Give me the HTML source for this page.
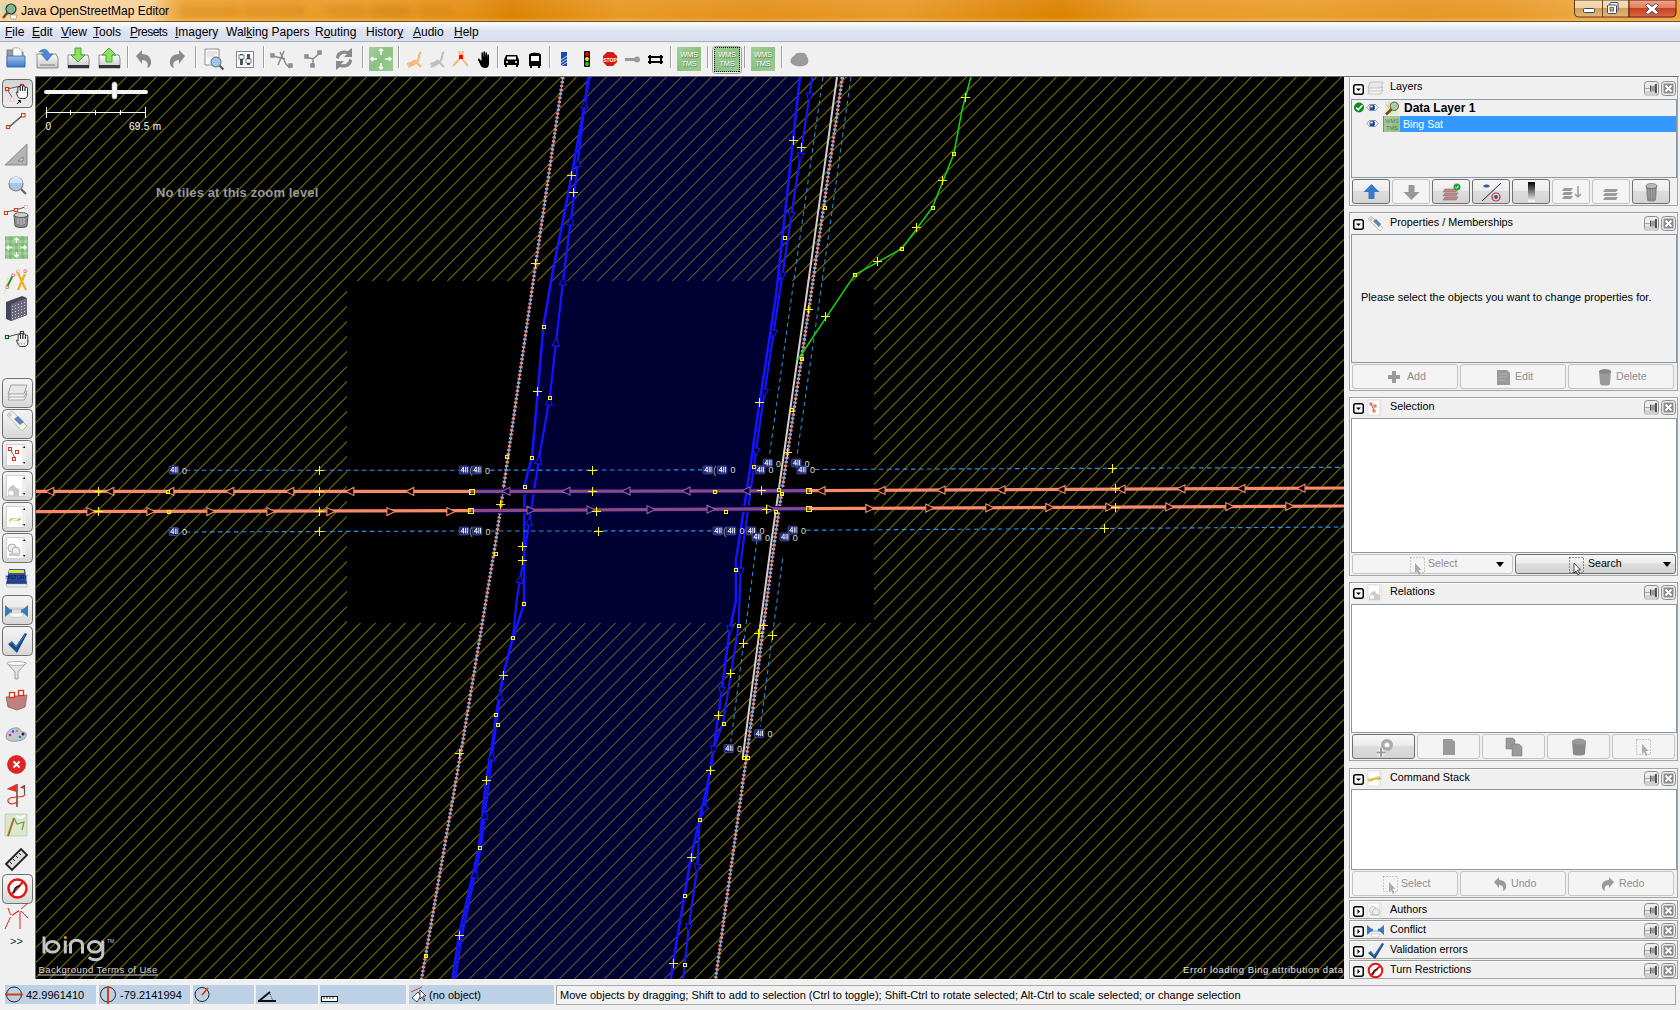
<!DOCTYPE html>
<html><head><meta charset="utf-8">
<style>
*{box-sizing:border-box}
html,body{margin:0;padding:0}
body{width:1680px;height:1010px;overflow:hidden;position:relative;background:#f0f0f0;font-family:"Liberation Sans",sans-serif;font-size:12px;color:#000}
.a{position:absolute}
#title{left:0;top:0;width:1680px;height:22px;background:linear-gradient(90deg,#eeb060 0px,#eca232 180px,#e99c28 350px,#e39018 470px,#dc8406 510px,#e89a28 620px,#e49220 760px,#e89c2c 900px,#e08c14 1000px,#dc8404 1060px,#e79a28 1150px,#eaa030 1300px,#e69828 1420px,#e89c2c 1500px,#eea640 1580px,#eaa040 1680px);border-bottom:1px solid #6e5030}
#title .t{left:21px;top:4px;font-size:12px;color:#000;white-space:nowrap}
#menu{left:0;top:22px;width:1680px;height:20px;background:linear-gradient(#fbfcfe 0,#f4f6fb 3px,#dde3f1 9px,#d8dff0 100%);border-bottom:1px solid #a8aeb8}
#menu span{position:absolute;top:3px;white-space:nowrap}
#tb{left:0;top:42px;width:1680px;height:34px;background:#f0f0f0}
#left{left:0;top:76px;width:36px;height:905px;background:#f0f0f0}
#map{left:36px;top:76px;width:1308px;height:904px;background:#000;overflow:hidden}
#rp{left:1344px;top:76px;width:336px;height:905px;background:#f0f0f0}
#status{left:0;top:980px;width:1680px;height:30px;background:#f0f0f0}
.sf{position:absolute;top:5px;height:19px;background:#bcd0e6;white-space:nowrap;padding-left:21px;line-height:21px;font-size:11px}
.dlg{position:absolute;left:1349px;width:329px;border:1px solid #a0a0a0;border-bottom-color:#b8b8b8;background:#f0f0f0}
.hdr{position:absolute;left:0;top:0;width:100%;height:20px}
.hdr .tg{position:absolute;left:3px;top:6px;width:11px;height:10px;border:1.5px solid #000;border-radius:2px;background:#fff}
.hdr .lbl{position:absolute;left:40px;top:3px;font-size:12px;color:#000;white-space:nowrap}
.pin,.cls{position:absolute;top:4px;width:15px;height:15px;border:1px solid #909090;border-radius:3px;background:#ececec}
.pin{left:294px}.cls{left:311px}
.list{position:absolute;left:1px;border:1px solid #8c98a8;background:#fff}
.btn{position:absolute;height:25px;border:1px solid #b8b8b8;border-radius:3px;background:#f2f2f2;color:#8a8a8a;font-size:10.6px;text-align:center;line-height:23px}
.sep{position:absolute;top:50px;width:2px;height:22px;border-left:1px solid #a0a0a0;border-right:1px solid #fff}
</style></head><body>
<div id="title" class="a"><div class="a" style="left:0;top:0;width:1680px;height:21px;background:linear-gradient(180deg,rgba(255,255,255,0.06) 0,rgba(255,255,255,0) 60%,rgba(255,230,170,0) 85%,rgba(255,220,150,0.35) 100%)"></div>
<div class="a" style="left:0;top:0;width:240px;height:21px;background:linear-gradient(90deg,rgba(248,214,164,0.95) 0,rgba(248,216,168,0.95) 150px,rgba(246,200,130,0.45) 168px,rgba(240,180,100,0) 185px)"></div>
<svg class="a" style="left:1px;top:2px" width="18" height="18" viewBox="0 0 18 18"><rect x="1" y="1" width="11" height="11" fill="#c8e0b0"/><circle cx="10" cy="7" r="5" fill="#80b890" stroke="#333" stroke-width="1.2"/><path d="M7 10l-5 6" stroke="#6a4a20" stroke-width="2.5"/><path d="M9 13h7l-1 4H10z" fill="#fff" stroke="#666" stroke-width="0.5"/></svg>
<div class="a" style="left:175px;top:4px;width:300px;height:14px;filter:blur(3px);opacity:0.15"><div class="a" style="left:5px;top:3px;width:60px;height:8px;background:#a05000"></div><div class="a" style="left:70px;top:2px;width:60px;height:9px;background:#a05000"></div><div class="a" style="left:150px;top:2px;width:40px;height:9px;background:#a05000"></div><div class="a" style="left:195px;top:2px;width:40px;height:10px;background:#904800"></div><div class="a" style="left:245px;top:3px;width:30px;height:8px;background:#a05000"></div></div><div class="t a">Java OpenStreetMap Editor</div>
<svg class="a" style="left:1574px;top:0" width="104" height="19" viewBox="0 0 104 19">
<defs><linearGradient id="wb" x1="0" y1="0" x2="0" y2="1"><stop offset="0" stop-color="#f6dfbc"/><stop offset="0.45" stop-color="#efd2a4"/><stop offset="0.5" stop-color="#cf9f58"/><stop offset="1" stop-color="#e2b878"/></linearGradient>
<linearGradient id="wc" x1="0" y1="0" x2="0" y2="1"><stop offset="0" stop-color="#f2a68a"/><stop offset="0.45" stop-color="#e08060"/><stop offset="0.5" stop-color="#c8401c"/><stop offset="1" stop-color="#d86a48"/></linearGradient></defs>
<path d="M0.5 0v13a4 4 0 0 0 4 4H55V0z" fill="url(#wb)" stroke="#5a3c1c" stroke-width="1"/>
<path d="M28.5 0v17" stroke="#6a4a2a" stroke-width="1"/>
<path d="M55 0v17h43a4 4 0 0 0 4-4V0z" fill="url(#wc)" stroke="#5a1c10" stroke-width="1"/>
<rect x="9.5" y="8.5" width="11" height="4" rx="1" fill="#fff" stroke="#3a4a6a" stroke-width="1"/>
<rect x="36" y="2.5" width="8" height="8" rx="1" fill="#fff" stroke="#3a4a6a" stroke-width="1"/><rect x="33.5" y="5" width="9" height="8.5" rx="1" fill="#fff" stroke="#3a4a6a" stroke-width="1"/><rect x="36" y="7.5" width="3.5" height="3.5" fill="#d8b070" stroke="#3a4a6a" stroke-width="0.8"/>
<path d="M74 3.5l4 3.2 4-3.2 2.5 2-3.5 3.5 3.5 3.5-2.5 2-4-3.2-4 3.2-2.5-2 3.5-3.5-3.5-3.5z" fill="#fff" stroke="#3a4a6a" stroke-width="0.9"/>
</svg>
</div>
<div id="menu" class="a">
<span style="left:5px"><u>F</u>ile</span><span style="left:32px"><u>E</u>dit</span><span style="left:61px"><u>V</u>iew</span><span style="left:93px"><u>T</u>ools</span><span style="left:130px;letter-spacing:-0.5px"><u>P</u>resets</span><span style="left:175px"><u>I</u>magery</span><span style="left:226px">Wal<u>k</u>ing Papers</span><span style="left:315px">R<u>o</u>uting</span><span style="left:366px">Histor<u>y</u></span><span style="left:413px"><u>A</u>udio</span><span style="left:454px"><u>H</u>elp</span>
</div>
<div id="tb" class="a">
<svg class="a" style="left:0;top:0" width="830" height="34" viewBox="0 42 830 34">
<defs>
<linearGradient id="gblue" x1="0" y1="0" x2="0" y2="1"><stop offset="0" stop-color="#9cc3ec"/><stop offset="1" stop-color="#3d78c8"/></linearGradient>
<linearGradient id="gdisk" x1="0" y1="0" x2="0" y2="1"><stop offset="0" stop-color="#fafafa"/><stop offset="1" stop-color="#c8c8c8"/></linearGradient>
<linearGradient id="wms" x1="0" y1="0" x2="1" y2="1"><stop offset="0" stop-color="#a4d098"/><stop offset="0.5" stop-color="#8cc284"/><stop offset="1" stop-color="#9ccb90"/></linearGradient>
</defs>
<!-- open -->
<path d="M7 50h6l2 2h8v14H7z" fill="#9a9a9a" stroke="#6a6a6a" stroke-width="0.8"/>
<path d="M13 48h6l3 3v6h-9z" fill="#fff" stroke="#888" stroke-width="0.6"/>
<path d="M7 56h18v11H7z" fill="url(#gblue)" stroke="#2d5fa8" stroke-width="0.8"/>
<!-- save -->
<path d="M37 54h19l2 4v10H37v-10z" fill="url(#gdisk)" stroke="#777" stroke-width="0.8"/>
<rect x="40" y="64" width="15" height="2" fill="#aaa"/>
<path d="M39 52c3-4 9-4 10 2h4l-6 7-6-7h4c-1-2-4-2-6-2z" fill="#4a8ad0" stroke="#2a6ab0" stroke-width="0.5"/>
<!-- download -->
<path d="M68 55h20l1 4v9H68v-9z" fill="url(#gdisk)" stroke="#777" stroke-width="0.8"/>
<rect x="68" y="65" width="21" height="3" fill="#333"/>
<path d="M75 48h6v7h4l-7 7-7-7h4z" fill="#8ee060" stroke="#3aa020" stroke-width="0.9"/>
<!-- upload -->
<path d="M99 55h20l1 4v9H99v-9z" fill="url(#gdisk)" stroke="#777" stroke-width="0.8"/>
<rect x="99" y="65" width="21" height="3" fill="#333"/>
<path d="M106 62h6v-7h4l-7-7-7 7h4z" fill="#8ee060" stroke="#3aa020" stroke-width="0.9"/>
<!-- undo/redo -->
<path d="M136 56l6-6v4c6 0 10 4 9 10-1 3-3 4-4 4 2-4 0-8-5-8v4z" fill="#8a8a8a"/>
<path d="M185 56l-6-6v4c-6 0-10 4-9 10 1 3 3 4 4 4-2-4 0-8 5-8v4z" fill="#8a8a8a"/>
<!-- doc magnifier -->
<path d="M205 49h14v16h-14z" fill="#fafafa" stroke="#777" stroke-width="0.8"/>
<path d="M207 52h10M207 54h10M207 56h8" stroke="#bbb" stroke-width="0.7"/>
<circle cx="216" cy="62" r="5" fill="#9cc6ee" stroke="#666" stroke-width="1"/>
<path d="M219.5 65.5l4 4" stroke="#555" stroke-width="2"/>
<!-- prefs -->
<rect x="236.5" y="51.5" width="17" height="16" fill="#fafafa" stroke="#888"/>
<rect x="240" y="54" width="3" height="11" fill="#456"/><rect x="239" y="55" width="5" height="4" fill="#fff" stroke="#333" stroke-width="0.6"/>
<rect x="247" y="54" width="3" height="11" fill="#456"/><rect x="246" y="59" width="5" height="4" fill="#fff" stroke="#333" stroke-width="0.6"/>
<!-- split/combine/reverse grey -->
<g stroke="#8a8a8a" fill="#9a9a9a" stroke-width="1.5">
<path d="M273 56l12 3M280 52l6 12 4 4M284 51l-6 14" fill="none"/>
<rect x="271" y="54" width="3" height="3"/><rect x="289" y="64" width="3" height="3"/>
<path d="M306 57l7 2 8-7M313 59l0 7" fill="none"/>
<rect x="305" y="55" width="3" height="3"/><rect x="318" y="51" width="3" height="3"/><rect x="311" y="64" width="3" height="3"/>
</g>
<path d="M336 58c0-6 6-9 12-7l4-3v9h-8l3-3c-4-1-8 1-8 5z M352 60c0 6-6 9-12 7l-4 3v-9h8l-3 3c4 1 8-1 8-5z" fill="#8a8a8a"/>
<!-- zoom to data green -->
<rect x="369" y="47" width="24" height="24" fill="url(#wms)"/>
<path d="M381 49v6M379 51l2-2 2 2M381 69v-6M379 67l2 2 2-2M371 59h6M373 57l-2 2 2 2M391 59h-6M389 57l2 2-2 2" stroke="#fff" stroke-width="1.5" fill="none"/>
<!-- orange tools -->
<path d="M408 67c4-2 8-3 10-7 2-3 0-6 3-8M407 64c3 0 5-1 7-3M414 60l7 7" stroke="#f3b878" stroke-width="2.2" fill="none"/>
<path d="M431 67c4-2 8-3 10-7 2-3 0-6 3-8M430 64c3 0 5-1 7-3M437 60l7 7" stroke="#c0c0c0" stroke-width="2.2" fill="none"/>
<path d="M453 66l8-9 7 9M461 57l-2-6M461 57l2-6" stroke="#f3b878" stroke-width="2" fill="none"/><rect x="459" y="55" width="4" height="4" fill="#f00"/>
<!-- hand -->
<path d="M478 60l2 4c1 3 3 4 5 4 3 0 4-2 4-5v-8c0-1-1.5-1-1.5 0v4l-0.5-6c0-1-1.5-1-1.5 0v5l-0.5-6c0-1-1.5-1-1.5 0v6l-0.5-5c0-1-1.5-1-1.5 0v8l-2-2c-1-1-2 0-1.5 1z" fill="#000"/>
<!-- car -->
<path d="M504 60l2-5h11l2 5v5h-15z" fill="#000"/><rect x="507" y="56.5" width="9" height="3" fill="#fff"/><circle cx="507" cy="62" r="1" fill="#fff"/><circle cx="516" cy="62" r="1" fill="#fff"/><rect x="505" y="65" width="2" height="2" fill="#000"/><rect x="516" y="65" width="2" height="2" fill="#000"/>
<!-- bus -->
<path d="M529 55c0-3 12-3 12 0v11h-12z" fill="#000"/><rect x="531" y="56" width="8" height="5" fill="#fff"/><rect x="530" y="66" width="2" height="2"/><rect x="538" y="66" width="2" height="2"/>
<!-- sign blue -->
<rect x="561" y="52" width="6" height="14" fill="#1a48b0"/><path d="M561 60l6-4M561 63l6-4M561 66l6-4" stroke="#fff" stroke-width="0.8"/>
<!-- traffic light -->
<rect x="584" y="51" width="6" height="16" rx="1" fill="#111"/><circle cx="587" cy="54" r="2" fill="#f00"/><circle cx="587" cy="59" r="2" fill="#ee0"/><circle cx="587" cy="64" r="2" fill="#2c2"/>
<!-- stop -->
<path d="M607 52h6l4 4v6l-4 4h-6l-4-4v-6z" fill="#d81818"/><text x="610" y="61.5" font-size="5" font-family="Liberation Sans" font-weight="bold" fill="#fff" text-anchor="middle">STOP</text>
<!-- barrier -->
<rect x="625" y="58" width="10" height="3" fill="#999"/><circle cx="637" cy="59.5" r="3" fill="#999"/>
<!-- bridge -->
<path d="M648 57h15M648 62h15M650 55v9M661 55v9" stroke="#000" stroke-width="2" fill="none"/>
<!-- wms -->
<rect x="677" y="47" width="24" height="24" fill="url(#wms)"/>
<rect x="712.5" y="46.5" width="29" height="27" rx="3" fill="none" stroke="#a0a0a0"/>
<rect x="714" y="47" width="26" height="25" fill="url(#wms)"/><rect x="714.5" y="47.5" width="25" height="24" fill="none" stroke="#000" stroke-width="1" stroke-dasharray="1 1" shape-rendering="crispEdges"/>
<rect x="751" y="47" width="24" height="24" fill="url(#wms)"/>
<g font-family="Liberation Sans" font-size="7.5" text-anchor="middle" letter-spacing="-0.3"><text x="689.6" y="57.6" fill="#5a7a5a">WMS</text><text x="689.6" y="66.6" fill="#5a7a5a">TMS</text><text x="689" y="57" fill="#fff">WMS</text><text x="689" y="66" fill="#fff">TMS</text><text x="727.6" y="57.6" fill="#5a7a5a">WMS</text><text x="727.6" y="66.6" fill="#5a7a5a">TMS</text><text x="727" y="57" fill="#fff">WMS</text><text x="727" y="66" fill="#fff">TMS</text><text x="763.6" y="57.6" fill="#5a7a5a">WMS</text><text x="763.6" y="66.6" fill="#5a7a5a">TMS</text><text x="763" y="57" fill="#fff">WMS</text><text x="763" y="66" fill="#fff">TMS</text></g>
<!-- cloud -->
<path d="M792 64c-3-2-1-7 2-8 1-3 5-4 7-3 3-1 6 1 6 4 2 2 2 6-1 8-4 2-10 2-14-1z" fill="#9a9a9a"/>
</svg>
<div class="sep" style="left:127px;top:4px"></div><div class="sep" style="left:195px;top:4px"></div><div class="sep" style="left:263px;top:4px"></div><div class="sep" style="left:362px;top:4px"></div><div class="sep" style="left:398px;top:4px"></div><div class="sep" style="left:497px;top:4px"></div><div class="sep" style="left:549px;top:4px"></div><div class="sep" style="left:670px;top:4px"></div><div class="sep" style="left:707px;top:4px"></div><div class="sep" style="left:744px;top:4px"></div><div class="sep" style="left:781px;top:4px"></div>
</div>
<div id="left" class="a"><svg class="a" style="left:0;top:0" width="36" height="905" viewBox="0 76 36 905"><defs><linearGradient id="gbtn" x1="0" y1="0" x2="0" y2="1"><stop offset="0" stop-color="#f4f4f4"/><stop offset="0.5" stop-color="#e8e8e8"/><stop offset="1" stop-color="#d6d6d6"/></linearGradient><linearGradient id="gbk" x1="0" y1="0" x2="0" y2="1"><stop offset="0" stop-color="#3a60b8"/><stop offset="1" stop-color="#1e3c90"/></linearGradient><pattern id="wms2" width="6" height="6" patternUnits="userSpaceOnUse"><rect width="6" height="6" fill="#8fc58a"/><rect x="0" y="0" width="3" height="3" fill="#a6d29c"/><rect x="3" y="3" width="3" height="3" fill="#7cb878"/></pattern></defs><linearGradient id="gpr" x1="0" y1="0" x2="0" y2="1"><stop offset="0" stop-color="#d2d2d2"/><stop offset="0.5" stop-color="#e4e4e4"/><stop offset="1" stop-color="#ececec"/></linearGradient><rect x="2.5" y="79.5" width="30" height="28" rx="4" fill="url(#gpr)" stroke="#6a6a6a"/><path d="M7 89l14-3M7 89l5 8" stroke="#222" stroke-width="0.7" fill="none"/><rect x="5.5" y="87.5" width="3" height="3" fill="#fff" stroke="#e03010" stroke-width="1.2"/><rect x="20.5" y="84.5" width="3" height="3" fill="#fff" stroke="#e03010" stroke-width="1.2"/><rect x="10.5" y="98" width="3" height="3" fill="#fff" stroke="#f0a090" stroke-width="0.6"/><g fill="#fff" stroke="#000" stroke-width="0.8"><rect x="17.9" y="86.6" width="2.4" height="7" rx="1.2"/><rect x="20.3" y="85.4" width="2.4" height="8" rx="1.2"/><rect x="22.7" y="85.8" width="2.4" height="8" rx="1.2"/><rect x="25.1" y="87.2" width="2.4" height="7" rx="1.2"/><path d="M16.2 92.3c.6-.6 1.3-.3 1.7.3v-1h9.6v3.2c0 2.3-1.6 3.7-3.8 3.7h-2.6c-1.6 0-2.6-.7-3.3-2z"/></g><path d="M18.3 91.6h8.9" stroke="#fff" stroke-width="1.2"/><path d="M17 104l3.2-3.2M18 100.6h2.4v2.4" stroke="#000" stroke-width="1" fill="none"/><path d="M9 127l14-12" stroke="#1a1a60" stroke-width="1.3"/><path d="M9 127l14-12" stroke="#e0d040" stroke-width="0.5"/><rect x="6.5" y="125.5" width="3" height="3" fill="#fff" stroke="#e03010"/><rect x="21.5" y="113.5" width="3.5" height="3.5" fill="#fff" stroke="#e03010"/><path d="M5 165L27 144v21z" fill="#b4b4b4" stroke="#7a7a7a" stroke-width="0.8"/><path d="M18 161l5-4v4z" fill="#ddd" stroke="#666" stroke-width="0.7"/><circle cx="16" cy="184" r="7" fill="#a8c4e8" stroke="#888" stroke-width="1.2"/><path d="M9.5 183a6.5 6.5 0 0 1 13 0z" fill="#d8e4f4"/><path d="M21 189l5 5" stroke="#666" stroke-width="2.2"/><path d="M6 212l10-2 9-3" stroke="#333" stroke-width="0.8" fill="none"/><rect x="4.5" y="211.5" width="3" height="3" fill="#fff" stroke="#e03010"/><rect x="14.5" y="208.5" width="3" height="3" fill="#fff" stroke="#e03010"/><rect x="24.5" y="205.5" width="3" height="3" fill="#fff" stroke="#f0a090" stroke-width="0.6"/><path d="M14 215h14l-1 11c-1 2-11 2-12 0z" fill="#8a8a8a" stroke="#444" stroke-width="0.8"/><ellipse cx="21" cy="215" rx="7" ry="2.5" fill="#ccc" stroke="#444" stroke-width="0.8"/><path d="M18 218v6M21 218v7M24 218v6" stroke="#ddd" stroke-width="0.8"/><rect x="5" y="236" width="23" height="23" fill="url(#wms2)"/><path d="M16.5 238v5M14.5 240l2-2 2 2M16.5 257v-5M14.5 255l2 2 2-2M7 247.5h5M9 245.5l-2 2 2 2M26 247.5h-5M24 245.5l2 2-2 2" stroke="#fff" stroke-width="1.3" fill="none"/><path d="M7 287l6-12" stroke="#1a9a1a" stroke-width="2"/><path d="M18 290l7-16M17 271l9 19" stroke="#e8b020" stroke-width="2.2"/><rect x="17" y="270" width="2.5" height="2.5" fill="#fff" stroke="#f08080" stroke-width="0.6"/><rect x="24" y="270" width="2.5" height="2.5" fill="#fff" stroke="#e03030" stroke-width="0.6"/><rect x="6" y="286" width="2.5" height="2.5" fill="#fff" stroke="#e03030" stroke-width="0.6"/><rect x="12" y="274" width="2.5" height="2.5" fill="#fff" stroke="#e03030" stroke-width="0.6"/><path d="M4 294l4-16" stroke="#cca" stroke-width="0.5"/><path d="M6 302l16-6 5 2v17l-16 6-5-2z" fill="#454555"/><path d="M11 304l16-6v17l-16 6z" fill="#6a6a7a"/><g fill="#ccd"><rect x="12" y="306" width="1" height="1"/><rect x="12" y="309" width="1" height="1"/><rect x="12" y="312" width="1" height="1"/><rect x="12" y="315" width="1" height="1"/><rect x="12" y="318" width="1" height="1"/><rect x="15" y="305" width="1" height="1"/><rect x="15" y="308" width="1" height="1"/><rect x="15" y="311" width="1" height="1"/><rect x="15" y="314" width="1" height="1"/><rect x="15" y="317" width="1" height="1"/><rect x="18" y="304" width="1" height="1"/><rect x="18" y="307" width="1" height="1"/><rect x="18" y="310" width="1" height="1"/><rect x="18" y="313" width="1" height="1"/><rect x="18" y="316" width="1" height="1"/><rect x="21" y="303" width="1" height="1"/><rect x="21" y="306" width="1" height="1"/><rect x="21" y="309" width="1" height="1"/><rect x="21" y="312" width="1" height="1"/><rect x="21" y="315" width="1" height="1"/><rect x="24" y="302" width="1" height="1"/><rect x="24" y="305" width="1" height="1"/><rect x="24" y="308" width="1" height="1"/><rect x="24" y="311" width="1" height="1"/><rect x="24" y="314" width="1" height="1"/></g><path d="M7 337l15-4" stroke="#222" stroke-width="0.8"/><rect x="5.5" y="335.5" width="3" height="3" fill="#fff" stroke="#1a5a1a" stroke-width="1.2"/><rect x="20.5" y="331.5" width="3" height="3" fill="#fff" stroke="#1a5a1a" stroke-width="1.2"/><g transform="translate(0.3,248)"><g fill="#fff" stroke="#000" stroke-width="0.8"><rect x="17.9" y="86.6" width="2.4" height="7" rx="1.2"/><rect x="20.3" y="85.4" width="2.4" height="8" rx="1.2"/><rect x="22.7" y="85.8" width="2.4" height="8" rx="1.2"/><rect x="25.1" y="87.2" width="2.4" height="7" rx="1.2"/><path d="M16.2 92.3c.6-.6 1.3-.3 1.7.3v-1h9.6v3.2c0 2.3-1.6 3.7-3.8 3.7h-2.6c-1.6 0-2.6-.7-3.3-2z" fill="#eef6ee"/></g><path d="M18.3 91.6h8.9" stroke="#fff" stroke-width="1.2"/><path d="M19 94.5v2M21.5 94.5v2M24 94.5v2" stroke="#3a8a3a" stroke-width="0.6"/></g><rect x="2.5" y="378.5" width="30" height="29" rx="4" fill="url(#gbtn)" stroke="#6e6e6e"/><rect x="2.5" y="409.5" width="30" height="29" rx="4" fill="url(#gbtn)" stroke="#6e6e6e"/><rect x="2.5" y="440.5" width="30" height="29" rx="4" fill="url(#gbtn)" stroke="#6e6e6e"/><rect x="2.5" y="471.5" width="30" height="29" rx="4" fill="url(#gbtn)" stroke="#6e6e6e"/><rect x="2.5" y="502.5" width="30" height="29" rx="4" fill="url(#gbtn)" stroke="#6e6e6e"/><rect x="2.5" y="533.5" width="30" height="29" rx="4" fill="url(#gbtn)" stroke="#6e6e6e"/><rect x="2.5" y="595.5" width="30" height="29" rx="4" fill="url(#gbtn)" stroke="#6e6e6e"/><rect x="2.5" y="626.5" width="30" height="29" rx="4" fill="url(#gbtn)" stroke="#6e6e6e"/><rect x="2.5" y="874.5" width="30" height="29" rx="4" fill="url(#gbtn)" stroke="#6e6e6e"/><g fill="#f6f6f6" stroke="#909090" stroke-width="0.8"><path d="M8 400l3-6h16l-3 6z"/><path d="M8 397l3-6h16l-3 6z"/><path d="M8 394l3-9h16l-3 9z" fill="#e6e6e6"/></g><path d="M7 415l5-4 15 15-5 5z" fill="#f4f4ec" stroke="#b0b090" stroke-width="0.8"/><path d="M14 419l4-3 6 6-4 3z" fill="#5a80c0"/><circle cx="10" cy="415" r="1.2" fill="none" stroke="#999" stroke-width="0.6"/><rect x="6.5" y="444.5" width="18" height="21" fill="#fff" stroke="#bbb" stroke-width="0.6"/><rect x="22" y="445" width="4" height="20" fill="#eee"/><path d="M23 448l1.2-2 1.2 2zM23 462l1.2 2 1.2-2z" fill="#000"/><path d="M10 449l3 5 2 4" stroke="#333" stroke-width="0.8" fill="none"/><rect x="8.5" y="447.5" width="3" height="3" fill="#fff" stroke="#e03010"/><rect x="15.5" y="450.5" width="3" height="3" fill="#fff" stroke="#e03010"/><rect x="12.5" y="457.5" width="3" height="3" fill="#fff" stroke="#e03010"/><rect x="6.5" y="475.5" width="18" height="21" fill="#fff" stroke="#bbb" stroke-width="0.6"/><rect x="22" y="476" width="4" height="20" fill="#eee"/><path d="M23 479l1.2-2 1.2 2zM23 493l1.2 2 1.2-2z" fill="#000"/><path d="M8 492c0-4 3-7 6-7l2 3 3 1v7H8z" fill="#c8c8c8"/><circle cx="11" cy="493" r="2.5" fill="#fff"/><rect x="6.5" y="506.5" width="18" height="21" fill="#fff" stroke="#bbb" stroke-width="0.6"/><rect x="22" y="507" width="4" height="20" fill="#eee"/><path d="M23 510l1.2-2 1.2 2zM23 524l1.2 2 1.2-2z" fill="#000"/><path d="M9 523c1-4 5-5 9-4l-1 2 4-1-2-3v2c-5-2-10 0-10 4z" fill="#7ac040"/><path d="M21 516c-1 4-5 5-9 4l1-2-4 1 2 3v-2c5 2 10 0 10-4z" fill="#f0c030"/><rect x="6.5" y="537.5" width="18" height="21" fill="#fff" stroke="#bbb" stroke-width="0.6"/><rect x="22" y="538" width="4" height="20" fill="#eee"/><path d="M23 541l1.2-2 1.2 2zM23 555l1.2 2 1.2-2z" fill="#000"/><circle cx="12" cy="548" r="4" fill="#eee" stroke="#999" stroke-width="0.8"/><circle cx="16" cy="551" r="4" fill="#eee" stroke="#999" stroke-width="0.8"/><rect x="9" y="553" width="11" height="3" fill="#ccc"/><path d="M6 584l3-15h16l2 15z" fill="url(#gbk)"/><rect x="9" y="570" width="15" height="3" fill="#e8e020"/><text x="16.5" y="579" font-size="5" font-family="Liberation Sans" fill="#001" text-anchor="middle">HISTORY</text><path d="M6 584h21v3H7z" fill="#eee" stroke="#999" stroke-width="0.5"/><path d="M9 613h15l-2 4H11z" fill="#fff" stroke="#aaa" stroke-width="0.5"/><path d="M9 609h15" stroke="#ccc" stroke-width="3"/><path d="M5 605l7 6-7 6zM28 605l-7 6 7 6z" fill="#3a78c0"/><path d="M5 611h7M21 611h7" stroke="#3a78c0" stroke-width="3"/><path d="M8 644l4-3 4 5 9-13 2 1-10 19z" fill="#1a4a80"/><path d="M9 644l3-2 4 5 9-12" stroke="#3a8ad0" stroke-width="1" fill="none"/><path d="M7 663h19l-8 9v7h-3v-7z" fill="#e4e4e8" stroke="#8a8a90" stroke-width="0.8"/><ellipse cx="16.5" cy="663.5" rx="9.5" ry="2" fill="#fafafa" stroke="#8a8a90" stroke-width="0.6"/><path d="M6 697l21-2-2 12-8 3-9-3z" fill="#c08080" stroke="#804040" stroke-width="0.6"/><rect x="9.5" y="692.5" width="5" height="5" fill="#fff" stroke="#e03010" stroke-width="1.3"/><rect x="18.5" y="690.5" width="5" height="5" fill="#fff" stroke="#e03010" stroke-width="1.3"/><path d="M6 737c0-6 6-10 12-9 3 1 2 4 5 4 4 0 4 3 2 6-3 4-19 5-19-1z" fill="#c4c4e0" stroke="#6a6a90" stroke-width="0.6"/><circle cx="10" cy="735" r="1.3" fill="#e03030"/><circle cx="13" cy="731.5" r="1.3" fill="#3050e0"/><circle cx="17" cy="731" r="1.3" fill="#e08020"/><circle cx="11" cy="739" r="1.3" fill="#e0e020"/><circle cx="20" cy="737" r="1.3" fill="#20a020"/><circle cx="23" cy="734" r="1.5" fill="#222"/><circle cx="16.5" cy="764.5" r="9" fill="#e02424"/><circle cx="16.5" cy="764.5" r="9" fill="none" stroke="#b01010" stroke-width="0.6"/><path d="M13.5 761.5l6 6M19.5 761.5l-6 6" stroke="#fff" stroke-width="2"/><path d="M17 784v23" stroke="#555" stroke-width="1.6"/><path d="M16.5 784l-10 5 10 3z" fill="#e83020"/><path d="M24.5 785v9" stroke="#555" stroke-width="1.2"/><path d="M24 785l-4 2.5 4 1.5z" fill="#e83020"/><path d="M17 797c-8 0-11 3-8 6 3 2 8 0 8-2M17 797c4 0 8-1 8-3" stroke="#e03020" stroke-width="1.2" fill="none"/><rect x="5" y="814" width="22" height="22" fill="#e8f0e0"/><path d="M5 814h22v22H5z" fill="#d8e8c8" stroke="#aaa" stroke-width="0.5"/><path d="M8 836l6-18" stroke="#b06a20" stroke-width="2"/><path d="M14 818l3 6 7-2-2 8" stroke="#6a9a50" stroke-width="1.2" fill="none"/><path d="M16 816l5 2 4-3" stroke="#fff" stroke-width="2" fill="none"/><path d="M6 864l15-15 6 6-15 15z" fill="#ddd" stroke="#222" stroke-width="1.8"/><path d="M10 862l2 2M13 859l2 2M16 856l2 2M19 853l2 2" stroke="#222" stroke-width="1"/><circle cx="17.5" cy="888.5" r="9" fill="#fff" stroke="#e01818" stroke-width="2.5"/><path d="M11 895l12-13" stroke="#e01818" stroke-width="2.2"/><path d="M14 893c0-5 2-7 6-7" stroke="#111" stroke-width="1.4" fill="none"/><path d="M5 929l6-13 9-6 8-7M11 916l-3-8M20 910v19M20 910l8 8M11 916l9-6" stroke="#e02020" stroke-width="1" fill="none"/><circle cx="11" cy="916" r="1.2" fill="#fff"/><circle cx="20" cy="910" r="1.2" fill="#fff"/><text x="10" y="945" font-size="11" font-family="Liberation Sans" fill="#1a2a50">&gt;&gt;</text><rect x="34" y="76" width="1" height="905" fill="#fafafa"/></svg></div>
<div id="map" class="a" style="left:34px;top:75px;width:1311px;height:905px;background:#000"><svg class="a" style="left:0;top:0" width="1311" height="905" viewBox="34 75 1311 905"><rect x="34" y="75" width="1311" height="905" fill="#fafafa"/><defs>
<pattern id="hatch" x="0" y="0" width="15" height="15" patternUnits="userSpaceOnUse"><g fill="#5e5e00" shape-rendering="crispEdges"><rect x="0" y="7" width="1" height="1"/><rect x="0" y="8" width="1" height="1" fill="#484800"/><rect x="1" y="6" width="1" height="1"/><rect x="1" y="7" width="1" height="1" fill="#484800"/><rect x="2" y="5" width="1" height="1"/><rect x="2" y="6" width="1" height="1" fill="#484800"/><rect x="3" y="4" width="1" height="1"/><rect x="3" y="5" width="1" height="1" fill="#484800"/><rect x="4" y="3" width="1" height="1"/><rect x="4" y="4" width="1" height="1" fill="#484800"/><rect x="5" y="2" width="1" height="1"/><rect x="5" y="3" width="1" height="1" fill="#484800"/><rect x="6" y="1" width="1" height="1"/><rect x="6" y="2" width="1" height="1" fill="#484800"/><rect x="7" y="0" width="1" height="1"/><rect x="7" y="1" width="1" height="1" fill="#484800"/><rect x="8" y="14" width="1" height="1"/><rect x="8" y="0" width="1" height="1" fill="#484800"/><rect x="9" y="13" width="1" height="1"/><rect x="9" y="14" width="1" height="1" fill="#484800"/><rect x="10" y="12" width="1" height="1"/><rect x="10" y="13" width="1" height="1" fill="#484800"/><rect x="11" y="11" width="1" height="1"/><rect x="11" y="12" width="1" height="1" fill="#484800"/><rect x="12" y="10" width="1" height="1"/><rect x="12" y="11" width="1" height="1" fill="#484800"/><rect x="13" y="9" width="1" height="1"/><rect x="13" y="10" width="1" height="1" fill="#484800"/><rect x="14" y="8" width="1" height="1"/><rect x="14" y="9" width="1" height="1" fill="#484800"/></g></pattern>
</defs>
<rect x="36" y="77" width="1308" height="902" fill="#000"/>
<rect x="36" y="77" width="1308" height="902" fill="url(#hatch)"/>
<rect x="347" y="281" width="527" height="342" fill="#000"/>
<polygon points="589.5,77.0 578.0,140.0 567.0,200.0 553.0,270.0 543.4,326.0 532.0,458.0 528.3,470.0 524.4,487.0 524.0,604.0 512.9,637.6 503.0,675.6 496.0,714.8 492.9,740.0 486.0,781.0 479.0,847.0 459.0,935.0 452.4,980.0 670.8,980.0 673.0,963.3 684.4,896.0 691.0,857.4 699.6,819.6 710.6,770.0 718.4,715.3 729.5,632.0 736.0,600.0 736.0,569.0 736.0,560.0 750.0,470.0 757.0,420.0 776.0,296.0 800.0,77.0" fill="#0000ff" fill-opacity="0.2" stroke="none"/>
<polyline points="563.0,77.0 534.0,276.0 496.0,540.0 463.0,740.0 421.4,980.0" fill="none" stroke="#f08a8a" stroke-width="3.4" stroke-linejoin="round" stroke-dasharray="2.2 1.8" stroke-linejoin="miter"/>
<polyline points="563.0,77.0 534.0,276.0 496.0,540.0 463.0,740.0 421.4,980.0" fill="none" stroke="#86a6d6" stroke-width="1.1" stroke-linejoin="round" />
<polyline points="842.4,77.0 810.8,296.0 774.7,540.0 748.8,740.0 715.5,980.0" fill="none" stroke="#f08a8a" stroke-width="3.4" stroke-linejoin="round" stroke-dasharray="2.2 1.8" stroke-linejoin="miter"/>
<polyline points="842.4,77.0 810.8,296.0 774.7,540.0 748.8,740.0 715.5,980.0" fill="none" stroke="#86a6d6" stroke-width="1.1" stroke-linejoin="round" />
<polyline points="823.0,77.0 792.5,290.0 769.5,455.0" fill="none" stroke="#3186d0" stroke-width="1.1" stroke-linejoin="round" stroke-dasharray="4.5 3.5"/>
<polyline points="757.0,540.0 730.8,742.0" fill="none" stroke="#3186d0" stroke-width="1.1" stroke-linejoin="round" stroke-dasharray="4.5 3.5"/>
<polyline points="851.0,77.0 820.9,290.0 797.0,455.0" fill="none" stroke="#3186d0" stroke-width="1.1" stroke-linejoin="round" stroke-dasharray="4.5 3.5"/>
<polyline points="782.6,558.6 760.4,726.5" fill="none" stroke="#3186d0" stroke-width="1.1" stroke-linejoin="round" stroke-dasharray="4.5 3.5"/>
<polyline points="837.0,77.0 806.4,296.0 771.6,540.0 742.6,758.5" fill="none" stroke="#cfcfcf" stroke-width="2" stroke-linejoin="round" />
<polyline points="797.6,360.0 854.7,274.9 901.9,248.6 932.4,207.5 953.9,153.6 962.0,110.0 970.9,77.0" fill="none" stroke="#10d810" stroke-width="1.5" stroke-linejoin="round" />
<polyline points="589.5,77.0 578.0,140.0 567.0,200.0 553.0,270.0 543.4,326.0 532.0,458.0 528.3,470.0 524.4,487.0 524.0,604.0 512.9,637.6 503.0,675.6 496.0,714.8 492.9,740.0 486.0,781.0 479.0,847.0 459.0,935.0 452.4,980.0" fill="none" stroke="#1414ff" stroke-width="2.6" stroke-linejoin="round" />
<polyline points="588.0,77.0 580.4,140.0 573.5,200.0 564.3,270.0 549.7,398.0 540.3,451.0 537.3,470.0 522.5,565.0 516.7,600.0 512.9,637.6" fill="none" stroke="#1414ff" stroke-width="2.2" stroke-linejoin="round" />
<polyline points="512.9,637.6 503.0,675.6 494.0,740.0 489.0,781.0 481.0,847.0 462.0,935.0 455.0,980.0" fill="none" stroke="#1414ff" stroke-width="2.2" stroke-linejoin="round" />
<polyline points="800.0,77.0 776.0,296.0 757.0,420.0 750.0,470.0 736.0,560.0 736.0,569.0 736.0,600.0 729.5,632.0 718.4,715.3 710.6,770.0 699.6,819.6 691.0,857.4 684.4,896.0 673.0,963.3 670.8,980.0" fill="none" stroke="#1414ff" stroke-width="2.6" stroke-linejoin="round" />
<polyline points="812.3,77.0 779.2,296.0 760.4,420.0 753.5,470.0 741.0,560.0 738.6,625.5 723.0,723.0 713.0,750.0 705.0,809.0 699.6,819.6 697.4,866.7 688.7,927.5 684.8,964.7 683.0,980.0" fill="none" stroke="#1414ff" stroke-width="2.2" stroke-linejoin="round" />
<path d="M585.2 100.0L587.6 108.3L580.9 107.5z" fill="#000010" stroke="#1414ff" stroke-width="1.1" stroke-linejoin="miter"/>
<path d="M578.3 158.5L580.7 166.8L574.0 166.1z" fill="#000010" stroke="#1414ff" stroke-width="1.1" stroke-linejoin="miter"/>
<path d="M571.3 217.0L573.6 225.4L566.9 224.5z" fill="#000010" stroke="#1414ff" stroke-width="1.1" stroke-linejoin="miter"/>
<path d="M563.5 277.0L566.0 285.3L559.2 284.6z" fill="#000010" stroke="#1414ff" stroke-width="1.1" stroke-linejoin="miter"/>
<path d="M556.5 338.0L559.0 346.3L552.3 345.6z" fill="#000010" stroke="#1414ff" stroke-width="1.1" stroke-linejoin="miter"/>
<path d="M549.8 397.0L552.3 405.3L545.5 404.6z" fill="#000010" stroke="#1414ff" stroke-width="1.1" stroke-linejoin="miter"/>
<path d="M539.5 456.0L541.6 464.4L534.9 463.4z" fill="#000010" stroke="#1414ff" stroke-width="1.1" stroke-linejoin="miter"/>
<path d="M530.0 517.0L532.1 525.4L525.4 524.4z" fill="#000010" stroke="#1414ff" stroke-width="1.1" stroke-linejoin="miter"/>
<path d="M520.8 575.0L522.9 583.4L516.2 582.3z" fill="#000010" stroke="#1414ff" stroke-width="1.1" stroke-linejoin="miter"/>
<path d="M500.7 692.0L503.0 700.4L496.2 699.5z" fill="#000010" stroke="#1414ff" stroke-width="1.1" stroke-linejoin="miter"/>
<path d="M492.5 752.0L494.9 760.4L488.2 759.5z" fill="#000010" stroke="#1414ff" stroke-width="1.1" stroke-linejoin="miter"/>
<path d="M485.4 811.0L487.8 819.4L481.0 818.5z" fill="#000010" stroke="#1414ff" stroke-width="1.1" stroke-linejoin="miter"/>
<path d="M476.0 870.0L477.7 878.5L471.0 877.1z" fill="#000010" stroke="#1414ff" stroke-width="1.1" stroke-linejoin="miter"/>
<path d="M808.7 101.0L806.5 92.6L813.2 93.6z" fill="#000010" stroke="#1414ff" stroke-width="1.1" stroke-linejoin="miter"/>
<path d="M799.6 161.0L797.4 152.6L804.2 153.6z" fill="#000010" stroke="#1414ff" stroke-width="1.1" stroke-linejoin="miter"/>
<path d="M790.7 220.0L788.5 211.6L795.2 212.6z" fill="#000010" stroke="#1414ff" stroke-width="1.1" stroke-linejoin="miter"/>
<path d="M781.6 280.0L779.5 271.6L786.2 272.6z" fill="#000010" stroke="#1414ff" stroke-width="1.1" stroke-linejoin="miter"/>
<path d="M772.8 338.0L770.7 329.6L777.4 330.6z" fill="#000010" stroke="#1414ff" stroke-width="1.1" stroke-linejoin="miter"/>
<path d="M763.9 397.0L761.7 388.6L768.4 389.6z" fill="#000010" stroke="#1414ff" stroke-width="1.1" stroke-linejoin="miter"/>
<path d="M755.4 456.0L753.2 447.6L759.9 448.5z" fill="#000010" stroke="#1414ff" stroke-width="1.1" stroke-linejoin="miter"/>
<path d="M740.4 576.0L737.3 567.9L744.1 568.1z" fill="#000010" stroke="#1414ff" stroke-width="1.1" stroke-linejoin="miter"/>
<path d="M729.2 634.0L726.9 625.6L733.7 626.5z" fill="#000010" stroke="#1414ff" stroke-width="1.1" stroke-linejoin="miter"/>
<path d="M721.1 695.0L718.8 686.6L725.5 687.5z" fill="#000010" stroke="#1414ff" stroke-width="1.1" stroke-linejoin="miter"/>
<path d="M712.9 754.0L710.6 745.6L717.4 746.6z" fill="#000010" stroke="#1414ff" stroke-width="1.1" stroke-linejoin="miter"/>
<path d="M702.5 814.0L703.1 805.3L709.1 808.4z" fill="#000010" stroke="#1414ff" stroke-width="1.1" stroke-linejoin="miter"/>
<path d="M696.6 872.0L694.4 863.6L701.1 864.6z" fill="#000010" stroke="#1414ff" stroke-width="1.1" stroke-linejoin="miter"/>
<path d="M688.2 932.0L685.7 923.7L692.4 924.4z" fill="#000010" stroke="#1414ff" stroke-width="1.1" stroke-linejoin="miter"/>
<polyline points="36.0,491.4 471.0,491.4" fill="none" stroke="#f98a6a" stroke-width="3.2" stroke-linejoin="round" />
<polyline points="36.0,511.6 471.0,510.6" fill="none" stroke="#f98a6a" stroke-width="3.2" stroke-linejoin="round" />
<polyline points="809.0,490.7 1344.0,488.0" fill="none" stroke="#f98a6a" stroke-width="3.2" stroke-linejoin="round" />
<polyline points="809.0,508.7 1344.0,506.0" fill="none" stroke="#f98a6a" stroke-width="3.2" stroke-linejoin="round" />
<polyline points="471.0,491.4 809.0,490.7" fill="none" stroke="#000058" stroke-width="6" stroke-linejoin="round" />
<polyline points="471.0,510.6 809.0,508.7" fill="none" stroke="#000058" stroke-width="6" stroke-linejoin="round" />
<polyline points="471.0,491.4 809.0,490.7" fill="none" stroke="#8c4a7c" stroke-width="3.2" stroke-linejoin="round" />
<polyline points="471.0,510.6 809.0,508.7" fill="none" stroke="#8c4a7c" stroke-width="3.2" stroke-linejoin="round" />
<path d="M45.8 491.4L53.8 487.4L53.8 495.4z" fill="#000" stroke="#f98a6a" stroke-width="1.1" stroke-linejoin="miter"/>
<path d="M105.8 491.4L113.8 487.4L113.8 495.4z" fill="#000" stroke="#f98a6a" stroke-width="1.1" stroke-linejoin="miter"/>
<path d="M165.8 491.4L173.8 487.4L173.8 495.4z" fill="#000" stroke="#f98a6a" stroke-width="1.1" stroke-linejoin="miter"/>
<path d="M225.8 491.4L233.8 487.4L233.8 495.4z" fill="#000" stroke="#f98a6a" stroke-width="1.1" stroke-linejoin="miter"/>
<path d="M285.8 491.4L293.8 487.4L293.8 495.4z" fill="#000" stroke="#f98a6a" stroke-width="1.1" stroke-linejoin="miter"/>
<path d="M345.8 491.4L353.8 487.4L353.8 495.4z" fill="#000" stroke="#f98a6a" stroke-width="1.1" stroke-linejoin="miter"/>
<path d="M405.8 491.4L413.8 487.4L413.8 495.4z" fill="#000" stroke="#f98a6a" stroke-width="1.1" stroke-linejoin="miter"/>
<path d="M502.0 491.3L510.0 487.3L510.0 495.3z" fill="#000058" stroke="#9a5a8a" stroke-width="1.1" stroke-linejoin="miter"/>
<path d="M562.0 491.2L570.0 487.2L570.0 495.2z" fill="#000058" stroke="#9a5a8a" stroke-width="1.1" stroke-linejoin="miter"/>
<path d="M622.0 491.1L630.0 487.1L630.0 495.1z" fill="#000058" stroke="#9a5a8a" stroke-width="1.1" stroke-linejoin="miter"/>
<path d="M682.0 491.0L690.0 487.0L690.0 495.0z" fill="#000058" stroke="#9a5a8a" stroke-width="1.1" stroke-linejoin="miter"/>
<path d="M742.0 490.8L750.0 486.8L750.0 494.8z" fill="#000058" stroke="#9a5a8a" stroke-width="1.1" stroke-linejoin="miter"/>
<path d="M817.0 490.7L825.0 486.7L825.0 494.7z" fill="#000" stroke="#f98a6a" stroke-width="1.1" stroke-linejoin="miter"/>
<path d="M877.0 490.4L885.0 486.4L885.0 494.4z" fill="#000" stroke="#f98a6a" stroke-width="1.1" stroke-linejoin="miter"/>
<path d="M937.0 490.1L945.0 486.1L945.0 494.1z" fill="#000" stroke="#f98a6a" stroke-width="1.1" stroke-linejoin="miter"/>
<path d="M997.0 489.8L1005.0 485.8L1005.0 493.8z" fill="#000" stroke="#f98a6a" stroke-width="1.1" stroke-linejoin="miter"/>
<path d="M1057.0 489.4L1065.0 485.4L1065.0 493.4z" fill="#000" stroke="#f98a6a" stroke-width="1.1" stroke-linejoin="miter"/>
<path d="M1117.0 489.1L1125.0 485.1L1125.0 493.1z" fill="#000" stroke="#f98a6a" stroke-width="1.1" stroke-linejoin="miter"/>
<path d="M1177.0 488.8L1185.0 484.8L1185.0 492.8z" fill="#000" stroke="#f98a6a" stroke-width="1.1" stroke-linejoin="miter"/>
<path d="M1237.0 488.5L1245.0 484.5L1245.0 492.5z" fill="#000" stroke="#f98a6a" stroke-width="1.1" stroke-linejoin="miter"/>
<path d="M1297.0 488.2L1305.0 484.2L1305.0 492.2z" fill="#000" stroke="#f98a6a" stroke-width="1.1" stroke-linejoin="miter"/>
<path d="M94.9 511.6L86.9 515.6L86.9 507.6z" fill="#000" stroke="#f98a6a" stroke-width="1.1" stroke-linejoin="miter"/>
<path d="M154.9 511.6L146.9 515.6L146.9 507.6z" fill="#000" stroke="#f98a6a" stroke-width="1.1" stroke-linejoin="miter"/>
<path d="M214.9 511.6L206.9 515.6L206.9 507.6z" fill="#000" stroke="#f98a6a" stroke-width="1.1" stroke-linejoin="miter"/>
<path d="M274.9 511.6L266.9 515.6L266.9 507.6z" fill="#000" stroke="#f98a6a" stroke-width="1.1" stroke-linejoin="miter"/>
<path d="M334.9 511.6L326.9 515.6L326.9 507.6z" fill="#000" stroke="#f98a6a" stroke-width="1.1" stroke-linejoin="miter"/>
<path d="M394.9 511.6L386.9 515.6L386.9 507.6z" fill="#000" stroke="#f98a6a" stroke-width="1.1" stroke-linejoin="miter"/>
<path d="M454.9 511.6L446.9 515.6L446.9 507.6z" fill="#000" stroke="#f98a6a" stroke-width="1.1" stroke-linejoin="miter"/>
<path d="M535.0 510.2L527.0 514.2L527.0 506.2z" fill="#000058" stroke="#9a5a8a" stroke-width="1.1" stroke-linejoin="miter"/>
<path d="M595.0 509.9L587.0 513.9L587.0 505.9z" fill="#000058" stroke="#9a5a8a" stroke-width="1.1" stroke-linejoin="miter"/>
<path d="M655.0 509.6L647.0 513.6L647.0 505.6z" fill="#000058" stroke="#9a5a8a" stroke-width="1.1" stroke-linejoin="miter"/>
<path d="M715.0 509.2L707.0 513.2L707.0 505.2z" fill="#000058" stroke="#9a5a8a" stroke-width="1.1" stroke-linejoin="miter"/>
<path d="M775.0 508.9L767.0 512.9L767.0 504.9z" fill="#000058" stroke="#9a5a8a" stroke-width="1.1" stroke-linejoin="miter"/>
<path d="M873.8 508.4L865.8 512.4L865.8 504.4z" fill="#000" stroke="#f98a6a" stroke-width="1.1" stroke-linejoin="miter"/>
<path d="M933.8 508.1L925.8 512.1L925.8 504.1z" fill="#000" stroke="#f98a6a" stroke-width="1.1" stroke-linejoin="miter"/>
<path d="M993.8 507.8L985.8 511.8L985.8 503.8z" fill="#000" stroke="#f98a6a" stroke-width="1.1" stroke-linejoin="miter"/>
<path d="M1053.8 507.5L1045.8 511.5L1045.8 503.5z" fill="#000" stroke="#f98a6a" stroke-width="1.1" stroke-linejoin="miter"/>
<path d="M1113.8 507.2L1105.8 511.2L1105.8 503.2z" fill="#000" stroke="#f98a6a" stroke-width="1.1" stroke-linejoin="miter"/>
<path d="M1173.8 506.9L1165.8 510.9L1165.8 502.9z" fill="#000" stroke="#f98a6a" stroke-width="1.1" stroke-linejoin="miter"/>
<path d="M1233.8 506.6L1225.8 510.6L1225.8 502.6z" fill="#000" stroke="#f98a6a" stroke-width="1.1" stroke-linejoin="miter"/>
<path d="M1293.8 506.3L1285.8 510.3L1285.8 502.3z" fill="#000" stroke="#f98a6a" stroke-width="1.1" stroke-linejoin="miter"/>
<polyline points="186.0,470.2 459.0,470.2" fill="none" stroke="#2f92e6" stroke-width="1.15" stroke-linejoin="round" stroke-dasharray="4.5 3.5"/>
<polyline points="490.0,470.2 702.0,469.9" fill="none" stroke="#2f92e6" stroke-width="1.15" stroke-linejoin="round" stroke-dasharray="4.5 3.5"/>
<polyline points="815.0,469.5 1344.0,467.3" fill="none" stroke="#2f92e6" stroke-width="1.15" stroke-linejoin="round" stroke-dasharray="4.5 3.5"/>
<polyline points="186.0,532.0 459.0,531.0" fill="none" stroke="#2f92e6" stroke-width="1.15" stroke-linejoin="round" stroke-dasharray="4.5 3.5"/>
<polyline points="491.0,531.0 712.0,530.9" fill="none" stroke="#2f92e6" stroke-width="1.15" stroke-linejoin="round" stroke-dasharray="4.5 3.5"/>
<polyline points="806.0,530.2 1344.0,527.0" fill="none" stroke="#2f92e6" stroke-width="1.15" stroke-linejoin="round" stroke-dasharray="4.5 3.5"/>
<rect x="169.0" y="466.0" width="9.5" height="8" rx="1.2" fill="#1c2478" stroke="#5a64a8" stroke-width="0.6"/><path d="M173.2 472.5v-5.5l-2.6 3.8h3.6M175.3 467.0v5.5M177.0 467.0v5.5" stroke="#fff" stroke-width="0.9" fill="none"/>
<text x="182.0" y="473.5" font-family="Liberation Sans" font-size="9" fill="#dddddd">0</text>
<rect x="169.0" y="527.5" width="9.5" height="8" rx="1.2" fill="#1c2478" stroke="#5a64a8" stroke-width="0.6"/><path d="M173.2 534.0v-5.5l-2.6 3.8h3.6M175.3 528.5v5.5M177.0 528.5v5.5" stroke="#fff" stroke-width="0.9" fill="none"/>
<text x="182.0" y="535.0" font-family="Liberation Sans" font-size="9" fill="#dddddd">0</text>
<rect x="459.3" y="466.0" width="9.5" height="8" rx="1.2" fill="#1c2478" stroke="#5a64a8" stroke-width="0.6"/><path d="M463.5 472.5v-5.5l-2.6 3.8h3.6M465.6 467.0v5.5M467.3 467.0v5.5" stroke="#fff" stroke-width="0.9" fill="none"/>
<text x="469.3" y="474.0" font-family="Liberation Sans" font-size="10" fill="#aaa">(</text>
<rect x="472.0" y="466.0" width="9.5" height="8" rx="1.2" fill="#1c2478" stroke="#5a64a8" stroke-width="0.6"/><path d="M476.2 472.5v-5.5l-2.6 3.8h3.6M478.3 467.0v5.5M480.0 467.0v5.5" stroke="#fff" stroke-width="0.9" fill="none"/>
<text x="485.0" y="473.5" font-family="Liberation Sans" font-size="9" fill="#dddddd">0</text>
<rect x="459.3" y="527.0" width="9.5" height="8" rx="1.2" fill="#1c2478" stroke="#5a64a8" stroke-width="0.6"/><path d="M463.5 533.5v-5.5l-2.6 3.8h3.6M465.6 528.0v5.5M467.3 528.0v5.5" stroke="#fff" stroke-width="0.9" fill="none"/>
<text x="469.3" y="535.0" font-family="Liberation Sans" font-size="10" fill="#aaa">(</text>
<rect x="472.5" y="527.0" width="9.5" height="8" rx="1.2" fill="#1c2478" stroke="#5a64a8" stroke-width="0.6"/><path d="M476.7 533.5v-5.5l-2.6 3.8h3.6M478.8 528.0v5.5M480.5 528.0v5.5" stroke="#fff" stroke-width="0.9" fill="none"/>
<text x="485.5" y="534.5" font-family="Liberation Sans" font-size="9" fill="#dddddd">0</text>
<rect x="703.0" y="465.9" width="9.5" height="8" rx="1.2" fill="#1c2478" stroke="#5a64a8" stroke-width="0.6"/><path d="M707.2 472.4v-5.5l-2.6 3.8h3.6M709.3 466.9v5.5M711.0 466.9v5.5" stroke="#fff" stroke-width="0.9" fill="none"/>
<text x="713.0" y="473.9" font-family="Liberation Sans" font-size="10" fill="#aaa">(</text>
<rect x="717.4" y="465.9" width="9.5" height="8" rx="1.2" fill="#1c2478" stroke="#5a64a8" stroke-width="0.6"/><path d="M721.6 472.4v-5.5l-2.6 3.8h3.6M723.7 466.9v5.5M725.4 466.9v5.5" stroke="#fff" stroke-width="0.9" fill="none"/>
<text x="730.4" y="473.4" font-family="Liberation Sans" font-size="9" fill="#dddddd">0</text>
<rect x="755.5" y="465.9" width="9.5" height="8" rx="1.2" fill="#1c2478" stroke="#5a64a8" stroke-width="0.6"/><path d="M759.7 472.4v-5.5l-2.6 3.8h3.6M761.8 466.9v5.5M763.5 466.9v5.5" stroke="#fff" stroke-width="0.9" fill="none"/>
<text x="768.5" y="473.4" font-family="Liberation Sans" font-size="9" fill="#dddddd">0</text>
<rect x="763.0" y="459.0" width="9.5" height="8" rx="1.2" fill="#1c2478" stroke="#5a64a8" stroke-width="0.6"/><path d="M767.2 465.5v-5.5l-2.6 3.8h3.6M769.3 460.0v5.5M771.0 460.0v5.5" stroke="#fff" stroke-width="0.9" fill="none"/>
<text x="776.0" y="466.5" font-family="Liberation Sans" font-size="9" fill="#dddddd">0</text>
<rect x="791.6" y="459.0" width="9.5" height="8" rx="1.2" fill="#1c2478" stroke="#5a64a8" stroke-width="0.6"/><path d="M795.8 465.5v-5.5l-2.6 3.8h3.6M797.9 460.0v5.5M799.6 460.0v5.5" stroke="#fff" stroke-width="0.9" fill="none"/>
<text x="804.6" y="466.5" font-family="Liberation Sans" font-size="9" fill="#dddddd">0</text>
<rect x="797.0" y="465.9" width="9.5" height="8" rx="1.2" fill="#1c2478" stroke="#5a64a8" stroke-width="0.6"/><path d="M801.2 472.4v-5.5l-2.6 3.8h3.6M803.3 466.9v5.5M805.0 466.9v5.5" stroke="#fff" stroke-width="0.9" fill="none"/>
<text x="810.0" y="473.4" font-family="Liberation Sans" font-size="9" fill="#dddddd">0</text>
<rect x="713.0" y="526.9" width="9.5" height="8" rx="1.2" fill="#1c2478" stroke="#5a64a8" stroke-width="0.6"/><path d="M717.2 533.4v-5.5l-2.6 3.8h3.6M719.3 527.9v5.5M721.0 527.9v5.5" stroke="#fff" stroke-width="0.9" fill="none"/>
<text x="723.0" y="534.9" font-family="Liberation Sans" font-size="10" fill="#aaa">(</text>
<rect x="726.4" y="526.9" width="9.5" height="8" rx="1.2" fill="#1c2478" stroke="#5a64a8" stroke-width="0.6"/><path d="M730.6 533.4v-5.5l-2.6 3.8h3.6M732.7 527.9v5.5M734.4 527.9v5.5" stroke="#fff" stroke-width="0.9" fill="none"/>
<text x="739.4" y="534.4" font-family="Liberation Sans" font-size="9" fill="#dddddd">0</text>
<rect x="746.5" y="526.9" width="9.5" height="8" rx="1.2" fill="#1c2478" stroke="#5a64a8" stroke-width="0.6"/><path d="M750.7 533.4v-5.5l-2.6 3.8h3.6M752.8 527.9v5.5M754.5 527.9v5.5" stroke="#fff" stroke-width="0.9" fill="none"/>
<text x="759.5" y="534.4" font-family="Liberation Sans" font-size="9" fill="#dddddd">0</text>
<rect x="752.0" y="533.0" width="9.5" height="8" rx="1.2" fill="#1c2478" stroke="#5a64a8" stroke-width="0.6"/><path d="M756.2 539.5v-5.5l-2.6 3.8h3.6M758.3 534.0v5.5M760.0 534.0v5.5" stroke="#fff" stroke-width="0.9" fill="none"/>
<text x="765.0" y="540.5" font-family="Liberation Sans" font-size="9" fill="#dddddd">0</text>
<rect x="788.0" y="526.2" width="9.5" height="8" rx="1.2" fill="#1c2478" stroke="#5a64a8" stroke-width="0.6"/><path d="M792.2 532.7v-5.5l-2.6 3.8h3.6M794.3 527.2v5.5M796.0 527.2v5.5" stroke="#fff" stroke-width="0.9" fill="none"/>
<text x="801.0" y="533.7" font-family="Liberation Sans" font-size="9" fill="#dddddd">0</text>
<rect x="779.8" y="533.0" width="9.5" height="8" rx="1.2" fill="#1c2478" stroke="#5a64a8" stroke-width="0.6"/><path d="M784.0 539.5v-5.5l-2.6 3.8h3.6M786.1 534.0v5.5M787.8 534.0v5.5" stroke="#fff" stroke-width="0.9" fill="none"/>
<text x="792.8" y="540.5" font-family="Liberation Sans" font-size="9" fill="#dddddd">0</text>
<rect x="754.5" y="729.6" width="9.5" height="8" rx="1.2" fill="#1c2478" stroke="#5a64a8" stroke-width="0.6"/><path d="M758.7 736.1v-5.5l-2.6 3.8h3.6M760.8 730.6v5.5M762.5 730.6v5.5" stroke="#fff" stroke-width="0.9" fill="none"/>
<text x="767.5" y="737.1" font-family="Liberation Sans" font-size="9" fill="#dddddd">0</text>
<rect x="724.0" y="744.5" width="9.5" height="8" rx="1.2" fill="#1c2478" stroke="#5a64a8" stroke-width="0.6"/><path d="M728.2 751.0v-5.5l-2.6 3.8h3.6M730.3 745.5v5.5M732.0 745.5v5.5" stroke="#fff" stroke-width="0.9" fill="none"/>
<text x="737.0" y="752.0" font-family="Liberation Sans" font-size="9" fill="#dddddd">0</text>
<rect x="469.5" y="489.5" width="5" height="5" fill="none" stroke="#ffff00" stroke-width="1.1" shape-rendering="crispEdges"/>
<rect x="468.5" y="508.5" width="5" height="5" fill="none" stroke="#ffff00" stroke-width="1.1" shape-rendering="crispEdges"/>
<rect x="806.5" y="488.5" width="5" height="5" fill="none" stroke="#ffff00" stroke-width="1.1" shape-rendering="crispEdges"/>
<rect x="806.5" y="506.5" width="5" height="5" fill="none" stroke="#ffff00" stroke-width="1.1" shape-rendering="crispEdges"/>
<rect x="166.5" y="490.5" width="3" height="3" fill="none" stroke="#ffff00" stroke-width="1.1" shape-rendering="crispEdges"/>
<rect x="167.5" y="510.5" width="3" height="3" fill="none" stroke="#ffff00" stroke-width="1.1" shape-rendering="crispEdges"/>
<rect x="713.5" y="490.5" width="3" height="3" fill="none" stroke="#ffff00" stroke-width="1.1" shape-rendering="crispEdges"/>
<rect x="724.5" y="510.5" width="3" height="3" fill="none" stroke="#ffff00" stroke-width="1.1" shape-rendering="crispEdges"/>
<rect x="530.5" y="456.5" width="3" height="3" fill="none" stroke="#ffff00" stroke-width="1.1" shape-rendering="crispEdges"/>
<rect x="505.5" y="455.5" width="3" height="3" fill="none" stroke="#ffff00" stroke-width="1.1" shape-rendering="crispEdges"/>
<rect x="542.5" y="325.5" width="3" height="3" fill="none" stroke="#ffff00" stroke-width="1.1" shape-rendering="crispEdges"/>
<rect x="548.5" y="396.5" width="3" height="3" fill="none" stroke="#ffff00" stroke-width="1.1" shape-rendering="crispEdges"/>
<rect x="523.5" y="485.5" width="3" height="3" fill="none" stroke="#ffff00" stroke-width="1.1" shape-rendering="crispEdges"/>
<rect x="522.5" y="602.5" width="3" height="3" fill="none" stroke="#ffff00" stroke-width="1.1" shape-rendering="crispEdges"/>
<rect x="511.5" y="636.5" width="3" height="3" fill="none" stroke="#ffff00" stroke-width="1.1" shape-rendering="crispEdges"/>
<rect x="494.5" y="713.5" width="3" height="3" fill="none" stroke="#ffff00" stroke-width="1.1" shape-rendering="crispEdges"/>
<rect x="496.5" y="723.5" width="3" height="3" fill="none" stroke="#ffff00" stroke-width="1.1" shape-rendering="crispEdges"/>
<rect x="478.5" y="846.5" width="3" height="3" fill="none" stroke="#ffff00" stroke-width="1.1" shape-rendering="crispEdges"/>
<rect x="424.5" y="954.5" width="3" height="3" fill="none" stroke="#ffff00" stroke-width="1.1" shape-rendering="crispEdges"/>
<rect x="494.5" y="552.5" width="3" height="3" fill="none" stroke="#ffff00" stroke-width="1.1" shape-rendering="crispEdges"/>
<rect x="783.5" y="236.5" width="3" height="3" fill="none" stroke="#ffff00" stroke-width="1.1" shape-rendering="crispEdges"/>
<rect x="752.5" y="465.5" width="3" height="3" fill="none" stroke="#ffff00" stroke-width="1.1" shape-rendering="crispEdges"/>
<rect x="734.5" y="568.5" width="3" height="3" fill="none" stroke="#ffff00" stroke-width="1.1" shape-rendering="crispEdges"/>
<rect x="737.5" y="624.5" width="3" height="3" fill="none" stroke="#ffff00" stroke-width="1.1" shape-rendering="crispEdges"/>
<rect x="722.5" y="722.5" width="3" height="3" fill="none" stroke="#ffff00" stroke-width="1.1" shape-rendering="crispEdges"/>
<rect x="698.5" y="818.5" width="3" height="3" fill="none" stroke="#ffff00" stroke-width="1.1" shape-rendering="crispEdges"/>
<rect x="683.5" y="894.5" width="3" height="3" fill="none" stroke="#ffff00" stroke-width="1.1" shape-rendering="crispEdges"/>
<rect x="683.5" y="963.5" width="3" height="3" fill="none" stroke="#ffff00" stroke-width="1.1" shape-rendering="crispEdges"/>
<rect x="823.5" y="206.5" width="3" height="3" fill="none" stroke="#ffff00" stroke-width="1.1" shape-rendering="crispEdges"/>
<rect x="790.5" y="408.5" width="3" height="3" fill="none" stroke="#ffff00" stroke-width="1.1" shape-rendering="crispEdges"/>
<rect x="800.5" y="357.5" width="3" height="3" fill="none" stroke="#ffff00" stroke-width="1.1" shape-rendering="crispEdges"/>
<rect x="777.5" y="488.5" width="3" height="3" fill="none" stroke="#ffff00" stroke-width="1.1" shape-rendering="crispEdges"/>
<rect x="780.5" y="492.5" width="3" height="3" fill="none" stroke="#ffff00" stroke-width="1.1" shape-rendering="crispEdges"/>
<rect x="774.5" y="510.5" width="3" height="3" fill="none" stroke="#ffff00" stroke-width="1.1" shape-rendering="crispEdges"/>
<rect x="742.5" y="756.5" width="3" height="3" fill="none" stroke="#ffff00" stroke-width="1.1" shape-rendering="crispEdges"/>
<rect x="746.5" y="756.5" width="3" height="3" fill="none" stroke="#ffff00" stroke-width="1.1" shape-rendering="crispEdges"/>
<rect x="853.5" y="273.5" width="3" height="3" fill="none" stroke="#ffff00" stroke-width="1.1" shape-rendering="crispEdges"/>
<rect x="900.5" y="247.5" width="3" height="3" fill="none" stroke="#ffff00" stroke-width="1.1" shape-rendering="crispEdges"/>
<rect x="931.5" y="206.5" width="3" height="3" fill="none" stroke="#ffff00" stroke-width="1.1" shape-rendering="crispEdges"/>
<rect x="952.5" y="152.5" width="3" height="3" fill="none" stroke="#ffff00" stroke-width="1.1" shape-rendering="crispEdges"/>
<path d="M94 491.5h9M98.5 487v9" stroke="#ffff00" stroke-width="1.1" shape-rendering="crispEdges"/>
<path d="M94 511.5h9M98.5 507v9" stroke="#ffff00" stroke-width="1.1" shape-rendering="crispEdges"/>
<path d="M315 470.5h9M319.5 466v9" stroke="#ffff00" stroke-width="1.1" shape-rendering="crispEdges"/>
<path d="M315 491.5h9M319.5 487v9" stroke="#ffff00" stroke-width="1.1" shape-rendering="crispEdges"/>
<path d="M315 511.5h9M319.5 507v9" stroke="#ffff00" stroke-width="1.1" shape-rendering="crispEdges"/>
<path d="M315 531.5h9M319.5 527v9" stroke="#ffff00" stroke-width="1.1" shape-rendering="crispEdges"/>
<path d="M588 470.5h9M592.5 466v9" stroke="#ffff00" stroke-width="1.1" shape-rendering="crispEdges"/>
<path d="M588 491.5h9M592.5 487v9" stroke="#ffff00" stroke-width="1.1" shape-rendering="crispEdges"/>
<path d="M592 511.5h9M596.5 507v9" stroke="#ffff00" stroke-width="1.1" shape-rendering="crispEdges"/>
<path d="M594 531.5h9M598.5 527v9" stroke="#ffff00" stroke-width="1.1" shape-rendering="crispEdges"/>
<path d="M1108 468.5h9M1112.5 464v9" stroke="#ffff00" stroke-width="1.1" shape-rendering="crispEdges"/>
<path d="M1111 488.5h9M1115.5 484v9" stroke="#ffff00" stroke-width="1.1" shape-rendering="crispEdges"/>
<path d="M1111 507.5h9M1115.5 503v9" stroke="#ffff00" stroke-width="1.1" shape-rendering="crispEdges"/>
<path d="M1100 528.5h9M1104.5 524v9" stroke="#ffff00" stroke-width="1.1" shape-rendering="crispEdges"/>
<path d="M531 263.5h9M535.5 259v9" stroke="#ffff00" stroke-width="1.1" shape-rendering="crispEdges"/>
<path d="M567 175.5h9M571.5 171v9" stroke="#ffff00" stroke-width="1.1" shape-rendering="crispEdges"/>
<path d="M569 192.5h9M573.5 188v9" stroke="#ffff00" stroke-width="1.1" shape-rendering="crispEdges"/>
<path d="M533 391.5h9M537.5 387v9" stroke="#ffff00" stroke-width="1.1" shape-rendering="crispEdges"/>
<path d="M496 504.5h9M500.5 500v9" stroke="#ffff00" stroke-width="1.1" shape-rendering="crispEdges"/>
<path d="M518 546.5h9M522.5 542v9" stroke="#ffff00" stroke-width="1.1" shape-rendering="crispEdges"/>
<path d="M518 560.5h9M522.5 556v9" stroke="#ffff00" stroke-width="1.1" shape-rendering="crispEdges"/>
<path d="M499 675.5h9M503.5 671v9" stroke="#ffff00" stroke-width="1.1" shape-rendering="crispEdges"/>
<path d="M482 780.5h9M486.5 776v9" stroke="#ffff00" stroke-width="1.1" shape-rendering="crispEdges"/>
<path d="M455 935.5h9M459.5 931v9" stroke="#ffff00" stroke-width="1.1" shape-rendering="crispEdges"/>
<path d="M455 753.5h9M459.5 749v9" stroke="#ffff00" stroke-width="1.1" shape-rendering="crispEdges"/>
<path d="M783 452.5h9M787.5 448v9" stroke="#ffff00" stroke-width="1.1" shape-rendering="crispEdges"/>
<path d="M755 402.5h9M759.5 398v9" stroke="#ffff00" stroke-width="1.1" shape-rendering="crispEdges"/>
<path d="M757 490.5h9M761.5 486v9" stroke="#ffff00" stroke-width="1.1" shape-rendering="crispEdges"/>
<path d="M762 509.5h9M766.5 505v9" stroke="#ffff00" stroke-width="1.1" shape-rendering="crispEdges"/>
<path d="M759 625.5h9M763.5 621v9" stroke="#ffff00" stroke-width="1.1" shape-rendering="crispEdges"/>
<path d="M754 633.5h9M758.5 629v9" stroke="#ffff00" stroke-width="1.1" shape-rendering="crispEdges"/>
<path d="M768 635.5h9M772.5 631v9" stroke="#ffff00" stroke-width="1.1" shape-rendering="crispEdges"/>
<path d="M739 643.5h9M743.5 639v9" stroke="#ffff00" stroke-width="1.1" shape-rendering="crispEdges"/>
<path d="M726 673.5h9M730.5 669v9" stroke="#ffff00" stroke-width="1.1" shape-rendering="crispEdges"/>
<path d="M714 715.5h9M718.5 711v9" stroke="#ffff00" stroke-width="1.1" shape-rendering="crispEdges"/>
<path d="M706 770.5h9M710.5 766v9" stroke="#ffff00" stroke-width="1.1" shape-rendering="crispEdges"/>
<path d="M687 857.5h9M691.5 853v9" stroke="#ffff00" stroke-width="1.1" shape-rendering="crispEdges"/>
<path d="M669 963.5h9M673.5 959v9" stroke="#ffff00" stroke-width="1.1" shape-rendering="crispEdges"/>
<path d="M789 140.5h9M793.5 136v9" stroke="#ffff00" stroke-width="1.1" shape-rendering="crispEdges"/>
<path d="M797 147.5h9M801.5 143v9" stroke="#ffff00" stroke-width="1.1" shape-rendering="crispEdges"/>
<path d="M804 309.5h9M808.5 305v9" stroke="#ffff00" stroke-width="1.1" shape-rendering="crispEdges"/>
<path d="M821 316.5h9M825.5 312v9" stroke="#ffff00" stroke-width="1.1" shape-rendering="crispEdges"/>
<path d="M873 261.5h9M877.5 257v9" stroke="#ffff00" stroke-width="1.1" shape-rendering="crispEdges"/>
<path d="M912 227.5h9M916.5 223v9" stroke="#ffff00" stroke-width="1.1" shape-rendering="crispEdges"/>
<path d="M938 180.5h9M942.5 176v9" stroke="#ffff00" stroke-width="1.1" shape-rendering="crispEdges"/>
<path d="M961 97.5h9M965.5 93v9" stroke="#ffff00" stroke-width="1.1" shape-rendering="crispEdges"/>
<path d="M482 780.5h9M486.5 776v9" stroke="#ffff00" stroke-width="1.1" shape-rendering="crispEdges"/>
<rect x="44" y="90" width="104" height="4" rx="2" fill="#f4f4f4"/><rect x="112" y="82" width="5" height="17" rx="2.5" fill="#f8f8f8" stroke="#bbb" stroke-width="0.6"/>
<path d="M46.5 107v11M145.5 107v11M46 112.5h100M70.5 110v5M95.5 110v5M120.5 110v5" stroke="#fff" stroke-width="1" fill="none"/>
<text x="45.5" y="130" font-family="Liberation Sans" font-size="10" fill="#fff">0</text><text x="129" y="130" font-family="Liberation Sans" font-size="10" fill="#fff" letter-spacing="0.3">69.5 m</text>
<text x="156" y="197" font-family="Liberation Sans" font-size="13" font-weight="bold" fill="#9a9a9a" letter-spacing="0.13">No tiles at this zoom level</text>
<g fill="none" stroke="#c4c4c4" stroke-width="3" stroke-linecap="butt"><path d="M44 936.5v17"/><ellipse cx="52.5" cy="946.8" rx="6.5" ry="5.3"/><path d="M65.3 940.5v13"/><path d="M70.5 953.5v-8c0-3.5 2.5-5.3 6-5.3s6 1.8 6 5.3v8"/><ellipse cx="94.8" cy="946.8" rx="6.5" ry="5.3"/><path d="M102.8 940.5v13c0 4-3 6.3-7.5 6.3c-3 0-5-1-6.5-2.5"/></g><circle cx="65.3" cy="937.5" r="1.6" fill="#e09020"/><text x="107" y="943" font-family="Liberation Sans" font-size="5" fill="#ccc">TM</text>
<text x="38.5" y="973" font-family="Liberation Sans" font-size="9.5" fill="#dcdcdc" letter-spacing="0.44">Background Terms of Use</text><path d="M38 975h120" stroke="#d0d0d0" stroke-width="1"/>
<text x="1343.5" y="973" text-anchor="end" font-family="Liberation Sans" font-size="9.5" fill="#e4e4e4" letter-spacing="0.54">Error loading Bing attribution data</text>
<g shape-rendering="crispEdges"><rect x="35" y="76" width="1309" height="1" fill="#646464"/><rect x="35" y="76" width="1" height="903" fill="#646464"/><rect x="35" y="979" width="1310" height="1" fill="#fafafa"/><rect x="1344" y="76" width="1" height="904" fill="#fafafa"/></g></svg></div>
<div id="rp" class="a"></div>
<div class="a" style="left:1344px;top:76px;width:335px;height:1px;background:#6c6c6c"></div>
<div class="a" style="left:1344px;top:77px;width:5px;height:1px;background:#fcfcfc"></div>
<div class="a" style="left:1349px;top:76px;width:329px;height:130px;border:1px solid #a4a4a4;border-top-color:#6c6c6c;box-shadow:inset 1px 1px 0 #fff"></div>
<div class="a" style="left:1349px;top:212px;width:329px;height:179px;border:1px solid #a4a4a4;border-top-color:#a0a0a0;box-shadow:inset 1px 1px 0 #fff"></div>
<div class="a" style="left:1349px;top:397px;width:329px;height:179px;border:1px solid #a4a4a4;border-top-color:#a0a0a0;box-shadow:inset 1px 1px 0 #fff"></div>
<div class="a" style="left:1349px;top:582px;width:329px;height:179px;border:1px solid #a4a4a4;border-top-color:#a0a0a0;box-shadow:inset 1px 1px 0 #fff"></div>
<div class="a" style="left:1349px;top:768px;width:329px;height:130px;border:1px solid #a4a4a4;border-top-color:#a0a0a0;box-shadow:inset 1px 1px 0 #fff"></div>
<div class="a" style="left:1349px;top:900px;width:329px;height:19px;border:1px solid #a4a4a4;border-top-color:#a0a0a0;box-shadow:inset 1px 1px 0 #fff"></div>
<div class="a" style="left:1349px;top:920px;width:329px;height:19px;border:1px solid #a4a4a4;border-top-color:#a0a0a0;box-shadow:inset 1px 1px 0 #fff"></div>
<div class="a" style="left:1349px;top:940px;width:329px;height:19px;border:1px solid #a4a4a4;border-top-color:#a0a0a0;box-shadow:inset 1px 1px 0 #fff"></div>
<div class="a" style="left:1349px;top:960px;width:329px;height:19px;border:1px solid #a4a4a4;border-top-color:#a0a0a0;box-shadow:inset 1px 1px 0 #fff"></div>
<svg class="a" style="left:1353px;top:84px" width="11" height="11" viewBox="0 0 11 11"><rect x="0.75" y="0.75" width="9.5" height="9.5" rx="2" fill="#fff" stroke="#000" stroke-width="1.5"/><path d="M3 4.5h5l-2.5 2.5z" fill="#000"/></svg><div class="a" style="left:1367px;top:80px;width:17px;height:17px"><svg width="17" height="17" viewBox="0 0 17 17"><g fill="#f4f4f4" stroke="#b8b8b8" stroke-width="0.8"><path d="M1 14l2-4h13l-2 4z"/><path d="M1 11l2-4h13l-2 4z"/><path d="M1 8l2-6h13l-2 6z" fill="#e8e8e8"/></g></svg></div><div class="a" style="left:1390px;top:80px;font-size:10.8px;white-space:nowrap">Layers</div><svg class="a" style="left:1643px;top:81px" width="34" height="16" viewBox="0 0 34 16">
<rect x="1.5" y="0.5" width="14" height="14" rx="3" fill="#ececec" stroke="#8c8c8c"/><path d="M2 10h12v3a2 2 0 0 1-2 2H4a2 2 0 0 1-2-2z" fill="#d0d0d0"/><path d="M2 7.5h5" stroke="#aaa" stroke-width="1.2"/><path d="M7 4.5h1.5v6H7z" fill="#555"/><path d="M8.5 5.5l4-1.5v7l-4-1.5z" fill="#9a9a9a"/><path d="M13 3v9" stroke="#333" stroke-width="1.6"/>
<rect x="18.5" y="0.5" width="14" height="14" rx="3" fill="#ececec" stroke="#8c8c8c"/><rect x="20.5" y="2.5" width="10" height="10" rx="1" fill="#8a8a8a"/><path d="M22.5 4.5l6 6M28.5 4.5l-6 6" stroke="#fff" stroke-width="1.8"/>
</svg>
<div class="a" style="left:1351px;top:99px;width:326px;height:79px;border:1px solid #8c98a8;background:#f0f0f0"></div>
<svg class="a" style="left:1352px;top:100px" width="324" height="34" viewBox="1352 100 324 34">
<circle cx="1359" cy="107.5" r="5" fill="#108a20"/><path d="M1356.3 107.6l2 2.2 4-4.6" stroke="#fff" stroke-width="1.6" fill="none"/>
<path d="M1367 107.5l2.5-3h6l2.5 3-2.5 3h-6z" fill="#fff" stroke="#555" stroke-width="0.6"/><rect x="1369.5" y="104.8" width="5.5" height="5.4" rx="2" fill="#1a4aa0"/><rect x="1370.5" y="105.5" width="2" height="2" fill="#fff"/>
<path d="M1367 123.5l2.5-3h6l2.5 3-2.5 3h-6z" fill="#fff" stroke="#555" stroke-width="0.6"/><rect x="1369.5" y="120.8" width="5.5" height="5.4" rx="2" fill="#1a4aa0"/><rect x="1370.5" y="121.5" width="2" height="2" fill="#fff"/>
<rect x="1385" y="101.5" width="13" height="13" fill="#dff0c0"/><path d="M1386 104l3 4 2 6M1390 101.5l-2 6" stroke="#f0b890" stroke-width="0.8" fill="none"/><circle cx="1394.3" cy="106.3" r="4.2" fill="#a8d0a0" stroke="#5a5a5a" stroke-width="1"/><path d="M1391.5 109.2l-5.5 5.3" stroke="#6a4a1a" stroke-width="2.6"/>
<rect x="1383" y="116" width="293" height="16" fill="#3399ff"/>
<rect x="1384" y="116" width="16" height="16" fill="#9cc890"/><rect x="1385" y="117" width="6" height="6" fill="#a8d09a"/><rect x="1392" y="124" width="7" height="7" fill="#90be86"/>
<g font-family="Liberation Sans" font-size="5.5" fill="#6a6a6a" text-anchor="middle"><text x="1392" y="122.5">WMS</text><text x="1392" y="129.5">TMS</text></g>
</svg>
<div class="a" style="left:1404px;top:101px;font-size:12px;font-weight:bold;white-space:nowrap">Data Layer 1</div>
<div class="a" style="left:1403px;top:118px;font-size:10.6px;color:#fff;white-space:nowrap">Bing Sat</div>
<div class="a" style="left:1352px;top:179px;width:38px;height:25px;border:1px solid #707070;border-radius:3px;background:linear-gradient(#f6f6f6 0,#ececec 45%,#dcdcdc 50%,#d4d4d4 100%);color:#000;font-size:10.6px;white-space:nowrap"><svg width="37" height="25" viewBox="0 0 37 25"><path d="M18.5 4l8 8h-5v7h-6v-7h-5z" fill="#3a78c8"/></svg></div>
<div class="a" style="left:1392px;top:179px;width:38px;height:25px;border:1px solid #c4c4c4;border-radius:3px;background:#f4f4f4;color:#8d8d8d;font-size:10.6px;white-space:nowrap"><svg width="37" height="25" viewBox="0 0 37 25"><path d="M18.5 20l8-8h-5V5h-6v7h-5z" fill="#999"/></svg></div>
<div class="a" style="left:1432px;top:179px;width:38px;height:25px;border:1px solid #707070;border-radius:3px;background:linear-gradient(#f6f6f6 0,#ececec 45%,#dcdcdc 50%,#d4d4d4 100%);color:#000;font-size:10.6px;white-space:nowrap"><svg width="37" height="25" viewBox="0 0 37 25"><g fill="#c08a8a" stroke="#806060" stroke-width="0.5"><path d="M10 20l2-3h13l-2 3z"/><path d="M10 16l2-3h13l-2 3z"/><path d="M10 12l2-3h13l-2 3z"/></g><circle cx="24" cy="7" r="3.5" fill="#2aa040"/><path d="M22.3 7l1.2 1.2 2-2.4" stroke="#fff" stroke-width="1" fill="none"/></svg></div>
<div class="a" style="left:1472px;top:179px;width:38px;height:25px;border:1px solid #707070;border-radius:3px;background:linear-gradient(#f6f6f6 0,#ececec 45%,#dcdcdc 50%,#d4d4d4 100%);color:#000;font-size:10.6px;white-space:nowrap"><svg width="37" height="25" viewBox="0 0 37 25"><path d="M9 21l19-18" stroke="#222" stroke-width="1"/><path d="M10 6c2-2 5-2 7 0-2 2-5 2-7 0z" fill="#2a5ab0"/><circle cx="23" cy="17" r="4" fill="none" stroke="#e02020" stroke-width="1.2"/><circle cx="23" cy="17" r="2" fill="#2a5ab0"/></svg></div>
<div class="a" style="left:1512px;top:179px;width:38px;height:25px;border:1px solid #707070;border-radius:3px;background:linear-gradient(#f6f6f6 0,#ececec 45%,#dcdcdc 50%,#d4d4d4 100%);color:#000;font-size:10.6px;white-space:nowrap"><svg width="37" height="25" viewBox="0 0 37 25"><defs><linearGradient id="op" x1="0" y1="0" x2="0" y2="1"><stop offset="0" stop-color="#000"/><stop offset="1" stop-color="#fff"/></linearGradient></defs><rect x="15" y="2" width="7" height="20" fill="url(#op)"/></svg></div>
<div class="a" style="left:1552px;top:179px;width:38px;height:25px;border:1px solid #c4c4c4;border-radius:3px;background:#f4f4f4;color:#8d8d8d;font-size:10.6px;white-space:nowrap"><svg width="37" height="25" viewBox="0 0 37 25"><g fill="#9a9a9a"><path d="M9 19l2-3h9l-2 3z"/><path d="M9 15l2-3h9l-2 3z"/><path d="M9 11l2-3h9l-2 3z"/></g><path d="M25 6v11M22 14l3 3 3-3" stroke="#9a9a9a" stroke-width="1.5" fill="none"/></svg></div>
<div class="a" style="left:1592px;top:179px;width:38px;height:25px;border:1px solid #c4c4c4;border-radius:3px;background:#f4f4f4;color:#8d8d8d;font-size:10.6px;white-space:nowrap"><svg width="37" height="25" viewBox="0 0 37 25"><g fill="#9a9a9a"><path d="M10 20l2-3h13l-2 3z"/><path d="M10 16l2-3h13l-2 3z"/><path d="M10 12l2-3h13l-2 3z"/></g></svg></div>
<div class="a" style="left:1632px;top:179px;width:38px;height:25px;border:1px solid #707070;border-radius:3px;background:linear-gradient(#f6f6f6 0,#ececec 45%,#dcdcdc 50%,#d4d4d4 100%);color:#000;font-size:10.6px;white-space:nowrap"><svg width="37" height="25" viewBox="0 0 37 25"><path d="M13 6h11l-1 14c-1 2-8 2-9 0z" fill="#888"/><ellipse cx="18.5" cy="6" rx="5.5" ry="2.5" fill="#bbb" stroke="#555" stroke-width="0.6"/><path d="M16 9v9M18.5 9v10M21 9v9" stroke="#aaa" stroke-width="0.8"/></svg></div>
<svg class="a" style="left:1353px;top:219px" width="11" height="11" viewBox="0 0 11 11"><rect x="0.75" y="0.75" width="9.5" height="9.5" rx="2" fill="#fff" stroke="#000" stroke-width="1.5"/><path d="M3 4.5h5l-2.5 2.5z" fill="#000"/></svg><div class="a" style="left:1367px;top:215px;width:17px;height:17px"><svg width="17" height="17" viewBox="0 0 17 17"><path d="M1 4l3-3 12 12-3 3z" fill="#f4f4ec" stroke="#b8b8a0" stroke-width="0.8"/><path d="M6 6l3-2 5 5-2 3z" fill="#5a80c0"/><circle cx="4" cy="4" r="1" fill="none" stroke="#999" stroke-width="0.6"/></svg></div><div class="a" style="left:1390px;top:216px;font-size:10.8px;white-space:nowrap">Properties / Memberships</div><svg class="a" style="left:1643px;top:216px" width="34" height="16" viewBox="0 0 34 16">
<rect x="1.5" y="0.5" width="14" height="14" rx="3" fill="#ececec" stroke="#8c8c8c"/><path d="M2 10h12v3a2 2 0 0 1-2 2H4a2 2 0 0 1-2-2z" fill="#d0d0d0"/><path d="M2 7.5h5" stroke="#aaa" stroke-width="1.2"/><path d="M7 4.5h1.5v6H7z" fill="#555"/><path d="M8.5 5.5l4-1.5v7l-4-1.5z" fill="#9a9a9a"/><path d="M13 3v9" stroke="#333" stroke-width="1.6"/>
<rect x="18.5" y="0.5" width="14" height="14" rx="3" fill="#ececec" stroke="#8c8c8c"/><rect x="20.5" y="2.5" width="10" height="10" rx="1" fill="#8a8a8a"/><path d="M22.5 4.5l6 6M28.5 4.5l-6 6" stroke="#fff" stroke-width="1.8"/>
</svg>
<div class="a" style="left:1351px;top:234px;width:326px;height:129px;border:1px solid #8c98a8;background:#f0f0f0"></div>
<div class="a" style="left:1361px;top:291px;font-size:11px;white-space:nowrap">Please select the objects you want to change properties for.</div>
<div class="a" style="left:1352px;top:364px;width:106px;height:25px;border:1px solid #c4c4c4;border-radius:3px;background:#f4f4f4;color:#8d8d8d;font-size:10.6px;white-space:nowrap"><div class="a" style="left:0;top:0;width:104px;height:23px"><svg class="a" style="left:34px;top:5px" width="14" height="14" viewBox="0 0 14 14"><path d="M5 1h4v4h4v4H9v4H5V9H1V5h4z" fill="#9a9a9a"/></svg><span class="a" style="left:54px;top:5px">Add</span></div></div>
<div class="a" style="left:1460px;top:364px;width:106px;height:25px;border:1px solid #c4c4c4;border-radius:3px;background:#f4f4f4;color:#8d8d8d;font-size:10.6px;white-space:nowrap"><div class="a" style="left:0;top:0;width:104px;height:23px"><svg class="a" style="left:34px;top:3px" width="18" height="18" viewBox="0 0 18 18"><path d="M2 2h10l3 3v12H2z" fill="#999"/><path d="M4 6h8M4 9h8M4 12h6" stroke="#bbb" stroke-width="0.8"/></svg><span class="a" style="left:54px;top:5px">Edit</span></div></div>
<div class="a" style="left:1568px;top:364px;width:106px;height:25px;border:1px solid #c4c4c4;border-radius:3px;background:#f4f4f4;color:#8d8d8d;font-size:10.6px;white-space:nowrap"><div class="a" style="left:0;top:0;width:104px;height:23px"><svg class="a" style="left:28px;top:3px" width="16" height="18" viewBox="0 0 16 18"><path d="M2 3h12l-1 13c-1 2-9 2-10 0z" fill="#9a9a9a"/><ellipse cx="8" cy="3.5" rx="6" ry="2.5" fill="#888"/></svg><span class="a" style="left:47px;top:5px">Delete</span></div></div>
<svg class="a" style="left:1353px;top:403px" width="11" height="11" viewBox="0 0 11 11"><rect x="0.75" y="0.75" width="9.5" height="9.5" rx="2" fill="#fff" stroke="#000" stroke-width="1.5"/><path d="M3 4.5h5l-2.5 2.5z" fill="#000"/></svg><div class="a" style="left:1367px;top:399px;width:17px;height:17px"><svg width="17" height="17" viewBox="0 0 17 17"><rect x="1" y="1" width="13" height="15" fill="#fff" stroke="#ccc" stroke-width="0.6"/><rect x="12" y="1" width="3" height="15" fill="#e8e8e8"/><path d="M4 5l2 4 1 3" stroke="#333" stroke-width="0.7" fill="none"/><rect x="3" y="4" width="2" height="2" fill="#fff" stroke="#e03010" stroke-width="0.8"/><rect x="7" y="6" width="2" height="2" fill="#fff" stroke="#e03010" stroke-width="0.8"/><rect x="6" y="11" width="2" height="2" fill="#fff" stroke="#e03010" stroke-width="0.8"/></svg></div><div class="a" style="left:1390px;top:400px;font-size:10.8px;white-space:nowrap">Selection</div><svg class="a" style="left:1643px;top:400px" width="34" height="16" viewBox="0 0 34 16">
<rect x="1.5" y="0.5" width="14" height="14" rx="3" fill="#ececec" stroke="#8c8c8c"/><path d="M2 10h12v3a2 2 0 0 1-2 2H4a2 2 0 0 1-2-2z" fill="#d0d0d0"/><path d="M2 7.5h5" stroke="#aaa" stroke-width="1.2"/><path d="M7 4.5h1.5v6H7z" fill="#555"/><path d="M8.5 5.5l4-1.5v7l-4-1.5z" fill="#9a9a9a"/><path d="M13 3v9" stroke="#333" stroke-width="1.6"/>
<rect x="18.5" y="0.5" width="14" height="14" rx="3" fill="#ececec" stroke="#8c8c8c"/><rect x="20.5" y="2.5" width="10" height="10" rx="1" fill="#8a8a8a"/><path d="M22.5 4.5l6 6M28.5 4.5l-6 6" stroke="#fff" stroke-width="1.8"/>
</svg>
<div class="a" style="left:1351px;top:418px;width:326px;height:135px;border:1px solid #8c98a8;background:#fff"></div>
<div class="a" style="left:1352px;top:554px;width:161px;height:20px;border:1px solid #c4c4c4;border-radius:3px;background:#f4f4f4;color:#8d8d8d;font-size:10.6px;white-space:nowrap"><div class="a" style="left:0;top:-2px;width:159px;height:20px"><svg class="a" style="left:55px;top:2px" width="20" height="20" viewBox="0 0 20 20"><rect x="2.5" y="2.5" width="14" height="15" fill="none" stroke="#999" stroke-dasharray="1 2"/><path d="M7 8v10l2-2 2 4 1.5-1-2-4h3z" fill="#aaa"/></svg><span class="a" style="left:75px;top:4px">Select</span><svg class="a" style="left:142px;top:9px" width="10" height="6"><path d="M1 0h8l-4 5z" fill="#000"/></svg></div></div>
<div class="a" style="left:1515px;top:554px;width:161px;height:20px;border:1px solid #707070;border-radius:3px;background:linear-gradient(#f6f6f6 0,#ececec 45%,#dcdcdc 50%,#d4d4d4 100%);color:#000;font-size:10.6px;white-space:nowrap"><div class="a" style="left:0;top:-2px;width:159px;height:20px"><svg class="a" style="left:51px;top:2px" width="20" height="20" viewBox="0 0 20 20"><rect x="2.5" y="2.5" width="14" height="15" fill="none" stroke="#333" stroke-dasharray="1 2"/><path d="M7 8v10l2-2 2 4 1.5-1-2-4h3z" fill="#fff" stroke="#000" stroke-width="0.7"/></svg><span class="a" style="left:72px;top:4px">Search</span><svg class="a" style="left:146px;top:9px" width="10" height="6"><path d="M1 0h8l-4 5z" fill="#000"/></svg></div></div>
<svg class="a" style="left:1353px;top:588px" width="11" height="11" viewBox="0 0 11 11"><rect x="0.75" y="0.75" width="9.5" height="9.5" rx="2" fill="#fff" stroke="#000" stroke-width="1.5"/><path d="M3 4.5h5l-2.5 2.5z" fill="#000"/></svg><div class="a" style="left:1367px;top:584px;width:17px;height:17px"><svg width="17" height="17" viewBox="0 0 17 17"><rect x="1" y="1" width="13" height="15" fill="#fff" stroke="#ccc" stroke-width="0.6"/><rect x="12" y="1" width="3" height="15" fill="#e8e8e8"/><path d="M2 14c0-4 3-7 6-7l2 3 3 1v5H2z" fill="#ccc"/><circle cx="5" cy="13" r="2" fill="#fff"/></svg></div><div class="a" style="left:1390px;top:585px;font-size:10.8px;white-space:nowrap">Relations</div><svg class="a" style="left:1643px;top:585px" width="34" height="16" viewBox="0 0 34 16">
<rect x="1.5" y="0.5" width="14" height="14" rx="3" fill="#ececec" stroke="#8c8c8c"/><path d="M2 10h12v3a2 2 0 0 1-2 2H4a2 2 0 0 1-2-2z" fill="#d0d0d0"/><path d="M2 7.5h5" stroke="#aaa" stroke-width="1.2"/><path d="M7 4.5h1.5v6H7z" fill="#555"/><path d="M8.5 5.5l4-1.5v7l-4-1.5z" fill="#9a9a9a"/><path d="M13 3v9" stroke="#333" stroke-width="1.6"/>
<rect x="18.5" y="0.5" width="14" height="14" rx="3" fill="#ececec" stroke="#8c8c8c"/><rect x="20.5" y="2.5" width="10" height="10" rx="1" fill="#8a8a8a"/><path d="M22.5 4.5l6 6M28.5 4.5l-6 6" stroke="#fff" stroke-width="1.8"/>
</svg>
<div class="a" style="left:1351px;top:604px;width:326px;height:129px;border:1px solid #8c98a8;background:#fff"></div>
<div class="a" style="left:1352px;top:734px;width:63px;height:25px;border:1px solid #707070;border-radius:3px;background:linear-gradient(#f6f6f6 0,#ececec 45%,#dcdcdc 50%,#d4d4d4 100%);color:#000;font-size:10.6px;white-space:nowrap"><svg class="a" style="left:22px;top:1px" width="20" height="22" viewBox="0 0 20 22"><circle cx="12" cy="9" r="6" fill="#aaa"/><circle cx="12" cy="9" r="2.5" fill="#fff"/><path d="M6 12v9M1.5 16.5h9" stroke="#fff" stroke-width="4"/><path d="M6 12v9M1.5 16.5h9" stroke="#999" stroke-width="2"/></svg></div>
<div class="a" style="left:1417px;top:734px;width:63px;height:25px;border:1px solid #c4c4c4;border-radius:3px;background:#f4f4f4;color:#8d8d8d;font-size:10.6px;white-space:nowrap"><svg class="a" style="left:22px;top:2px" width="18" height="20" viewBox="0 0 18 20"><path d="M3 2h9l3 3v13H3z" fill="#9a9a9a"/></svg></div>
<div class="a" style="left:1482px;top:734px;width:63px;height:25px;border:1px solid #c4c4c4;border-radius:3px;background:#f4f4f4;color:#8d8d8d;font-size:10.6px;white-space:nowrap"><svg class="a" style="left:21px;top:1px" width="20" height="22" viewBox="0 0 20 22"><path d="M2 2h7l2 2v9H2z" fill="#9a9a9a" stroke="#777" stroke-width="0.5"/><path d="M8 8h7l3 3v9H8z" fill="#9a9a9a" stroke="#777" stroke-width="0.5"/></svg></div>
<div class="a" style="left:1547px;top:734px;width:63px;height:25px;border:1px solid #c4c4c4;border-radius:3px;background:#f4f4f4;color:#8d8d8d;font-size:10.6px;white-space:nowrap"><svg class="a" style="left:22px;top:2px" width="18" height="20" viewBox="0 0 18 20"><path d="M2 4h14l-1 13c-1 2-11 2-12 0z" fill="#8a8a8a"/><ellipse cx="9" cy="4.5" rx="7" ry="3" fill="#9a9a9a"/></svg></div>
<div class="a" style="left:1612px;top:734px;width:63px;height:25px;border:1px solid #c4c4c4;border-radius:3px;background:#f4f4f4;color:#8d8d8d;font-size:10.6px;white-space:nowrap"><svg class="a" style="left:21px;top:2px" width="20" height="20" viewBox="0 0 20 20"><rect x="2.5" y="2.5" width="14" height="15" fill="none" stroke="#999" stroke-dasharray="1 2"/><path d="M8 7v10l2-2 2 4 1.5-1-2-4h3z" fill="#aaa"/></svg></div>
<svg class="a" style="left:1353px;top:774px" width="11" height="11" viewBox="0 0 11 11"><rect x="0.75" y="0.75" width="9.5" height="9.5" rx="2" fill="#fff" stroke="#000" stroke-width="1.5"/><path d="M3 4.5h5l-2.5 2.5z" fill="#000"/></svg><div class="a" style="left:1367px;top:770px;width:17px;height:17px"><svg width="17" height="17" viewBox="0 0 17 17"><rect x="1" y="1" width="13" height="15" fill="#fff" stroke="#ccc" stroke-width="0.6"/><rect x="12" y="1" width="3" height="15" fill="#e8e8e8"/><path d="M2 12c1-4 5-5 9-4l-1 2 4-1-2-3v2" fill="#7ac040"/><path d="M12 6c-1 4-5 5-9 4l1-2-4 1 2 3V10" fill="#f0c030"/></svg></div><div class="a" style="left:1390px;top:771px;font-size:10.8px;white-space:nowrap">Command Stack</div><svg class="a" style="left:1643px;top:771px" width="34" height="16" viewBox="0 0 34 16">
<rect x="1.5" y="0.5" width="14" height="14" rx="3" fill="#ececec" stroke="#8c8c8c"/><path d="M2 10h12v3a2 2 0 0 1-2 2H4a2 2 0 0 1-2-2z" fill="#d0d0d0"/><path d="M2 7.5h5" stroke="#aaa" stroke-width="1.2"/><path d="M7 4.5h1.5v6H7z" fill="#555"/><path d="M8.5 5.5l4-1.5v7l-4-1.5z" fill="#9a9a9a"/><path d="M13 3v9" stroke="#333" stroke-width="1.6"/>
<rect x="18.5" y="0.5" width="14" height="14" rx="3" fill="#ececec" stroke="#8c8c8c"/><rect x="20.5" y="2.5" width="10" height="10" rx="1" fill="#8a8a8a"/><path d="M22.5 4.5l6 6M28.5 4.5l-6 6" stroke="#fff" stroke-width="1.8"/>
</svg>
<div class="a" style="left:1351px;top:789px;width:326px;height:81px;border:1px solid #8c98a8;background:#fff"></div>
<div class="a" style="left:1352px;top:871px;width:106px;height:25px;border:1px solid #c4c4c4;border-radius:3px;background:#f4f4f4;color:#8d8d8d;font-size:10.6px;white-space:nowrap"><div class="a" style="left:0;top:0;width:104px;height:23px"><svg class="a" style="left:28px;top:2px" width="20" height="20" viewBox="0 0 20 20"><rect x="2.5" y="2.5" width="14" height="15" fill="none" stroke="#999" stroke-dasharray="1 2"/><path d="M8 8v10l2-2 2 4 1.5-1-2-4h3z" fill="#aaa"/></svg><span class="a" style="left:48px;top:5px">Select</span></div></div>
<div class="a" style="left:1460px;top:871px;width:106px;height:25px;border:1px solid #c4c4c4;border-radius:3px;background:#f4f4f4;color:#8d8d8d;font-size:10.6px;white-space:nowrap"><div class="a" style="left:0;top:0;width:104px;height:23px"><svg class="a" style="left:31px;top:3px" width="16" height="18" viewBox="0 0 16 18"><path d="M2 7l5-5v3c5 0 8 3 7 8-1 2-2 3-3 3 1-3 0-6-4-6v3z" fill="#9a9a9a"/></svg><span class="a" style="left:50px;top:5px">Undo</span></div></div>
<div class="a" style="left:1568px;top:871px;width:106px;height:25px;border:1px solid #c4c4c4;border-radius:3px;background:#f4f4f4;color:#8d8d8d;font-size:10.6px;white-space:nowrap"><div class="a" style="left:0;top:0;width:104px;height:23px"><svg class="a" style="left:31px;top:3px" width="16" height="18" viewBox="0 0 16 18"><path d="M14 7l-5-5v3c-5 0-8 3-7 8 1 2 2 3 3 3-1-3 0-6 4-6v3z" fill="#9a9a9a"/></svg><span class="a" style="left:50px;top:5px">Redo</span></div></div>
<svg class="a" style="left:1353px;top:906px" width="11" height="11" viewBox="0 0 11 11"><rect x="0.75" y="0.75" width="9.5" height="9.5" rx="2" fill="#fff" stroke="#000" stroke-width="1.5"/><path d="M4.5 3v5l2.5-2.5z" fill="#000"/></svg><div class="a" style="left:1367px;top:902px;width:17px;height:17px"><svg width="17" height="17" viewBox="0 0 17 17"><rect x="1" y="1" width="13" height="15" fill="#fff" stroke="#ccc" stroke-width="0.6"/><rect x="12" y="1" width="3" height="15" fill="#e8e8e8"/><circle cx="6" cy="8" r="3.5" fill="#eee" stroke="#aaa" stroke-width="0.7"/><circle cx="9" cy="10" r="3.5" fill="#eee" stroke="#aaa" stroke-width="0.7"/><rect x="3" y="12" width="9" height="2" fill="#ccc"/></svg></div><div class="a" style="left:1390px;top:903px;font-size:10.8px;white-space:nowrap">Authors</div><svg class="a" style="left:1643px;top:903px" width="34" height="16" viewBox="0 0 34 16">
<rect x="1.5" y="0.5" width="14" height="14" rx="3" fill="#ececec" stroke="#8c8c8c"/><path d="M2 10h12v3a2 2 0 0 1-2 2H4a2 2 0 0 1-2-2z" fill="#d0d0d0"/><path d="M2 7.5h5" stroke="#aaa" stroke-width="1.2"/><path d="M7 4.5h1.5v6H7z" fill="#555"/><path d="M8.5 5.5l4-1.5v7l-4-1.5z" fill="#9a9a9a"/><path d="M13 3v9" stroke="#333" stroke-width="1.6"/>
<rect x="18.5" y="0.5" width="14" height="14" rx="3" fill="#ececec" stroke="#8c8c8c"/><rect x="20.5" y="2.5" width="10" height="10" rx="1" fill="#8a8a8a"/><path d="M22.5 4.5l6 6M28.5 4.5l-6 6" stroke="#fff" stroke-width="1.8"/>
</svg>
<svg class="a" style="left:1353px;top:926px" width="11" height="11" viewBox="0 0 11 11"><rect x="0.75" y="0.75" width="9.5" height="9.5" rx="2" fill="#fff" stroke="#000" stroke-width="1.5"/><path d="M4.5 3v5l2.5-2.5z" fill="#000"/></svg><div class="a" style="left:1367px;top:922px;width:17px;height:17px"><svg width="17" height="17" viewBox="0 0 17 17"><path d="M4 12h9l-1 3H5z" fill="#fff" stroke="#aaa" stroke-width="0.5"/><path d="M4 9h9" stroke="#ccc" stroke-width="2"/><path d="M0 3l6 5-6 5zM17 3l-6 5 6 5z" fill="#3a78c0"/><path d="M0 8h6M11 8h6" stroke="#3a78c0" stroke-width="2.5"/></svg></div><div class="a" style="left:1390px;top:923px;font-size:10.8px;white-space:nowrap">Conflict</div><svg class="a" style="left:1643px;top:923px" width="34" height="16" viewBox="0 0 34 16">
<rect x="1.5" y="0.5" width="14" height="14" rx="3" fill="#ececec" stroke="#8c8c8c"/><path d="M2 10h12v3a2 2 0 0 1-2 2H4a2 2 0 0 1-2-2z" fill="#d0d0d0"/><path d="M2 7.5h5" stroke="#aaa" stroke-width="1.2"/><path d="M7 4.5h1.5v6H7z" fill="#555"/><path d="M8.5 5.5l4-1.5v7l-4-1.5z" fill="#9a9a9a"/><path d="M13 3v9" stroke="#333" stroke-width="1.6"/>
<rect x="18.5" y="0.5" width="14" height="14" rx="3" fill="#ececec" stroke="#8c8c8c"/><rect x="20.5" y="2.5" width="10" height="10" rx="1" fill="#8a8a8a"/><path d="M22.5 4.5l6 6M28.5 4.5l-6 6" stroke="#fff" stroke-width="1.8"/>
</svg>
<svg class="a" style="left:1353px;top:946px" width="11" height="11" viewBox="0 0 11 11"><rect x="0.75" y="0.75" width="9.5" height="9.5" rx="2" fill="#fff" stroke="#000" stroke-width="1.5"/><path d="M4.5 3v5l2.5-2.5z" fill="#000"/></svg><div class="a" style="left:1367px;top:942px;width:17px;height:17px"><svg width="17" height="17" viewBox="0 0 17 17"><path d="M1 11l3-2 3 4 8-12 2 1-9 15z" fill="#1a4a80"/><path d="M2 11l2-1 3 4 8-11" stroke="#3a8ad0" stroke-width="0.8" fill="none"/></svg></div><div class="a" style="left:1390px;top:943px;font-size:10.8px;white-space:nowrap">Validation errors</div><svg class="a" style="left:1643px;top:943px" width="34" height="16" viewBox="0 0 34 16">
<rect x="1.5" y="0.5" width="14" height="14" rx="3" fill="#ececec" stroke="#8c8c8c"/><path d="M2 10h12v3a2 2 0 0 1-2 2H4a2 2 0 0 1-2-2z" fill="#d0d0d0"/><path d="M2 7.5h5" stroke="#aaa" stroke-width="1.2"/><path d="M7 4.5h1.5v6H7z" fill="#555"/><path d="M8.5 5.5l4-1.5v7l-4-1.5z" fill="#9a9a9a"/><path d="M13 3v9" stroke="#333" stroke-width="1.6"/>
<rect x="18.5" y="0.5" width="14" height="14" rx="3" fill="#ececec" stroke="#8c8c8c"/><rect x="20.5" y="2.5" width="10" height="10" rx="1" fill="#8a8a8a"/><path d="M22.5 4.5l6 6M28.5 4.5l-6 6" stroke="#fff" stroke-width="1.8"/>
</svg>
<svg class="a" style="left:1353px;top:966px" width="11" height="11" viewBox="0 0 11 11"><rect x="0.75" y="0.75" width="9.5" height="9.5" rx="2" fill="#fff" stroke="#000" stroke-width="1.5"/><path d="M4.5 3v5l2.5-2.5z" fill="#000"/></svg><div class="a" style="left:1367px;top:962px;width:17px;height:17px"><svg width="17" height="17" viewBox="0 0 17 17"><circle cx="8.5" cy="8.5" r="6.8" fill="#fff" stroke="#e01818" stroke-width="2"/><path d="M3.5 13.5l10-10" stroke="#e01818" stroke-width="1.8"/><path d="M6 13c0-4 2-6 5-6" stroke="#111" stroke-width="1.2" fill="none"/></svg></div><div class="a" style="left:1390px;top:963px;font-size:10.8px;white-space:nowrap">Turn Restrictions</div><svg class="a" style="left:1643px;top:963px" width="34" height="16" viewBox="0 0 34 16">
<rect x="1.5" y="0.5" width="14" height="14" rx="3" fill="#ececec" stroke="#8c8c8c"/><path d="M2 10h12v3a2 2 0 0 1-2 2H4a2 2 0 0 1-2-2z" fill="#d0d0d0"/><path d="M2 7.5h5" stroke="#aaa" stroke-width="1.2"/><path d="M7 4.5h1.5v6H7z" fill="#555"/><path d="M8.5 5.5l4-1.5v7l-4-1.5z" fill="#9a9a9a"/><path d="M13 3v9" stroke="#333" stroke-width="1.6"/>
<rect x="18.5" y="0.5" width="14" height="14" rx="3" fill="#ececec" stroke="#8c8c8c"/><rect x="20.5" y="2.5" width="10" height="10" rx="1" fill="#8a8a8a"/><path d="M22.5 4.5l6 6M28.5 4.5l-6 6" stroke="#fff" stroke-width="1.8"/>
</svg>
<div id="status" class="a">
<div class="sf" style="left:5px;width:91px">42.9961410</div>
<div class="sf" style="left:99px;width:91px">-79.2141994</div>
<div class="sf" style="left:193px;width:61px"></div>
<div class="sf" style="left:256px;width:62px"></div>
<div class="sf" style="left:320px;width:86px"></div>
<div class="sf" style="left:409px;width:145px;padding-left:20px">(no object)</div>
<div class="a" style="left:556px;top:5px;width:1120px;height:20px;border:1px solid #a8a8a8;background:#f2f2f2;padding-left:3px;line-height:19px;white-space:nowrap;font-size:11px">Move objects by dragging; Shift to add to selection (Ctrl to toggle); Shift-Ctrl to rotate selected; Alt-Ctrl to scale selected; or change selection</div>
<svg class="a" style="left:0;top:0" width="560" height="30" viewBox="0 980 560 30">
<circle cx="14" cy="994.5" r="7.5" fill="none" stroke="#222" stroke-width="1"/><path d="M5 994.5h18" stroke="#e03a10" stroke-width="2"/>
<circle cx="108" cy="994.5" r="7.5" fill="none" stroke="#222" stroke-width="1"/><path d="M108 986v18" stroke="#e03a10" stroke-width="2"/>
<circle cx="202" cy="994.5" r="7" fill="none" stroke="#222" stroke-width="1"/><path d="M202 995l6-7" stroke="#e03a10" stroke-width="1.8"/>
<path d="M258 1001h18M259 1001l11-9" stroke="#111" stroke-width="2" fill="none"/><path d="M270 994l3 7" stroke="#111" stroke-width="0.8" stroke-dasharray="1 1"/>
<rect x="321.5" y="996.5" width="16" height="5" fill="#fff" stroke="#111"/><path d="M324 997v2M327 997v2M330 997v2M333 997v2" stroke="#111" stroke-width="0.8"/>
<path d="M412 998l6-6 3 4-4 6z" fill="#fff" stroke="#222" stroke-width="0.8"/><path d="M411 992l11-5" stroke="#d04020" stroke-width="1"/><path d="M420 990v9l2-2 2 4 1-1-2-4h3z" fill="#fff" stroke="#000" stroke-width="0.7"/>
</svg>
</div>
</body></html>
